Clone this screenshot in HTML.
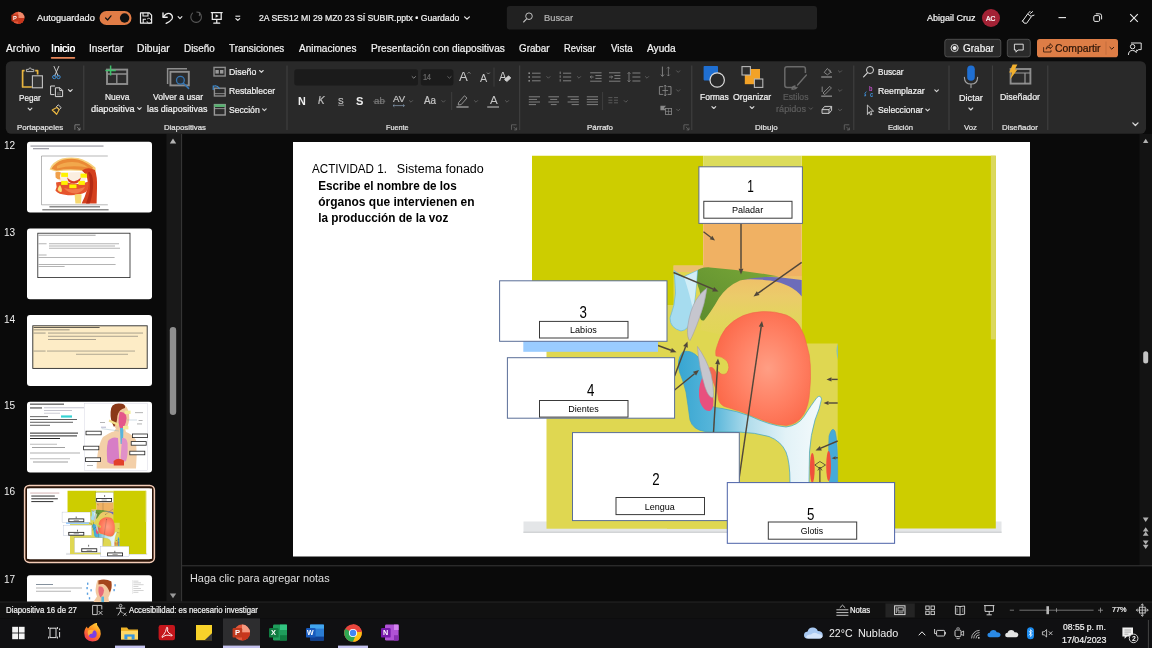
<!DOCTYPE html>
<html lang="es"><head><meta charset="utf-8"><title>2A SES12 MI 29 MZ0 23 SÍ SUBIR.pptx - PowerPoint</title>
<style>html,body{margin:0;padding:0;background:#0a0a0a;}
body{width:1152px;height:648px;overflow:hidden;position:relative;font-family:"Liberation Sans",sans-serif;}
#labels{position:absolute;left:0;top:0;width:1152px;height:648px;will-change:transform;}
#app{position:absolute;left:0;top:0;width:1152px;height:648px;overflow:hidden;background:#0a0a0a;}
svg{position:absolute;left:0;top:0;will-change:transform;}
svg text{font-family:"Liberation Sans",sans-serif;}
.t{position:absolute;white-space:pre;display:block;transform-origin:0 50%;-webkit-text-stroke:0.22px currentColor;}</style></head><body><div id="app">
<svg width="1152" height="648" viewBox="0 0 1152 648">
<g id="titlebar"><circle cx="18.2" cy="17.9" r="6.2" fill="#e4573a"/><path d="M18.2,11.7 A6.2,6.2 0 0 1 24.4,17.9 L18.2,17.9 Z" fill="#f08a6c"/><path d="M18.2,17.9 L24.4,17.9 A6.2,6.2 0 0 1 18.2,24.1 Z" fill="#c8361c"/>
<rect x="11.4" y="14.4" width="7" height="7" rx="1" fill="#c03a1e"/>
<rect x="99.5" y="11" width="32" height="14" rx="7" fill="#e17c46"/><circle cx="124.6" cy="18" r="4.7" fill="#101010"/>
<path d="M105.6,18 L107.6,20 L111,15.8" stroke="#141414" stroke-width="1.2" fill="none" stroke-linecap="round" stroke-linejoin="round"/>
<path d="M140.5,12.8 L149.3,12.8 L151.6,15.1 L151.6,23.2 L140.5,23.2 Z" stroke="#ececec" stroke-width="1.2" fill="none" stroke-linejoin="round"/>
<path d="M143,12.8 L143,16 L148,16 L148,12.8 M143.2,23 L143.2,19.3 L146,19.3" stroke="#ececec" stroke-width="1.1" fill="none"/>
<path d="M147.2,19 A2.2,2.2 0 0 1 151,20.5 M150.8,22.6 A2.2,2.2 0 0 1 147,21.2" stroke="#ececec" stroke-width="0.9" fill="none"/><rect x="146" y="17.6" width="6.4" height="6.4" fill="#0a0a0a" opacity="0"/>
<path d="M163,13 L163,17.2 L167.2,17.2" stroke="#ececec" stroke-width="1.35" fill="none" stroke-linecap="round" stroke-linejoin="round"/>
<path d="M163.3,17 Q166.4,12.4 170,13.6 Q173.4,15.6 172,19 Q170.4,21.4 166.2,23.4" stroke="#ececec" stroke-width="1.35" fill="none" stroke-linecap="round"/>
<path d="M178.1,16.7 L180.0,18.6 L181.9,16.7" stroke="#ececec" stroke-width="1.1" fill="none" stroke-linecap="round" stroke-linejoin="round"/>
<path d="M199.5,13 A5.3,5.3 0 1 1 192.5,13.2" stroke="#585858" stroke-width="1.1" fill="none" stroke-linecap="round"/><path d="M196.8,12 L199.8,12.6 L199.3,15.6" stroke="#585858" stroke-width="1.1" fill="none" stroke-linecap="round" stroke-linejoin="round"/>
<path d="M211.3,12.6 L222.2,12.6 M212.3,12.6 L212.3,19.4 L221.2,19.4 L221.2,12.6 M216.75,19.4 L216.75,23 M213.8,23.2 L219.7,23.2" stroke="#ececec" stroke-width="1.25" fill="none" stroke-linecap="round"/>
<path d="M215.6,14.3 L218.6,16 L215.6,17.7 Z" fill="#ececec"/>
<path d="M235.4,16.2 L240.2,16.2" stroke="#ececec" stroke-width="1.1"/><path d="M235.9,18.6 L237.8,20.4 L239.7,18.6" stroke="#ececec" stroke-width="1.2" fill="none" stroke-linecap="round" stroke-linejoin="round"/>
<path d="M464.6,16.8 L467.0,19.2 L469.4,16.8" stroke="#ececec" stroke-width="1.2" fill="none" stroke-linecap="round" stroke-linejoin="round"/>
<rect x="506.8" y="6" width="310.2" height="23.6" rx="3" fill="#212121"/>
<circle cx="529" cy="16.2" r="3.3" stroke="#c0c0c0" stroke-width="1" fill="none"/><path d="M526.6,18.8 L523.6,22" stroke="#c0c0c0" stroke-width="1.1" stroke-linecap="round"/>
<circle cx="991" cy="18" r="9" fill="#a32235"/>
<path d="M1022.6,21 L1027.6,14 L1031.4,16.6 L1026.6,23.3 Q1023.6,24.2 1022.6,21 Z M1028,13.6 L1030,11.4 M1031.6,16 L1034,15.2 M1030.4,13.4 L1032.6,11.6" stroke="#ececec" stroke-width="1" fill="none" stroke-linejoin="round" stroke-linecap="round"/>
<path d="M1058.5,17.6 L1066,17.6" stroke="#ececec" stroke-width="1.1"/>
<rect x="1093.8" y="15.6" width="5.8" height="5.8" rx="1.2" stroke="#ececec" stroke-width="1" fill="none"/><path d="M1095.8,13.8 L1099.6,13.8 Q1101.6,13.8 1101.6,15.8 L1101.6,19.4" stroke="#ececec" stroke-width="1" fill="none"/>
<path d="M1130.2,14.2 L1137.8,21.8 M1137.8,14.2 L1130.2,21.8" stroke="#ececec" stroke-width="1.1"/>
<rect x="50.8" y="57" width="24.4" height="1.7" rx="0.8" fill="#e8875a"/>
<rect x="944.8" y="39.3" width="56" height="17.6" rx="2.5" fill="#2a2a2a" stroke="#5a5a5a" stroke-width="0.8"/>
<circle cx="954.6" cy="48" r="3.6" stroke="#ececec" stroke-width="0.9" fill="none"/><circle cx="954.6" cy="48" r="2" fill="#ececec"/>
<rect x="1007.3" y="39.3" width="23" height="17.6" rx="2.5" fill="#2a2a2a" stroke="#5a5a5a" stroke-width="0.8"/>
<path d="M1014.4,44.2 L1023.2,44.2 L1023.2,50 L1018,50 L1016,52.2 L1016,50 L1014.4,50 Z" stroke="#ececec" stroke-width="0.9" fill="none" stroke-linejoin="round"/>
<rect x="1037" y="39" width="81" height="18.2" rx="2.8" fill="#dd7d46"/>
<path d="M1106,41.5 L1106,54.7" stroke="#b9673a" stroke-width="0.7"/>
<path d="M1043.6,47.2 L1043.6,52 L1051,52 L1051,50.2 M1046,49.2 Q1046.4,45.6 1050,45.4 L1050,43.6 L1052.8,46.2 L1050,48.8 L1050,47.2 Q1047.4,47.2 1046,49.2 Z" stroke="#3a1c0c" stroke-width="0.85" fill="none" stroke-linejoin="round"/>
<path d="M1109.9,47.3 L1111.8,49.2 L1113.7,47.3" stroke="#3a1c0c" stroke-width="1" fill="none" stroke-linecap="round" stroke-linejoin="round"/>
<circle cx="1132.6" cy="46.6" r="2.2" stroke="#ececec" stroke-width="0.95" fill="none"/><path d="M1128.4,54.6 Q1128.6,50.4 1132.6,50.4 Q1135.4,50.4 1136.4,52.6" stroke="#ececec" stroke-width="0.95" fill="none" stroke-linecap="round"/><path d="M1131,43 L1141.2,43 L1141.2,49.6 L1138.6,49.6 L1136.6,51.4 L1136.8,49.6" stroke="#ececec" stroke-width="0.95" fill="none" stroke-linejoin="round"/></g>
<g id="ribbon"><rect x="5.8" y="61.2" width="1140.2" height="72.6" rx="5.5" fill="#292929"/>
<path d="M83.8,65.5 L83.8,130" stroke="#454545" stroke-width="0.9"/>
<path d="M287,65.5 L287,130" stroke="#454545" stroke-width="0.9"/>
<path d="M519.7,65.5 L519.7,130" stroke="#454545" stroke-width="0.9"/>
<path d="M691.8,65.5 L691.8,130" stroke="#454545" stroke-width="0.9"/>
<path d="M853.8,65.5 L853.8,130" stroke="#454545" stroke-width="0.9"/>
<path d="M949,65.5 L949,130" stroke="#454545" stroke-width="0.9"/>
<path d="M992.4,65.5 L992.4,130" stroke="#454545" stroke-width="0.9"/>
<path d="M1047.8,65.5 L1047.8,130" stroke="#454545" stroke-width="0.9"/>
<path d="M74.9,124.8 L74.9,129.8 M74.9,124.8 L79.9,124.8" stroke="#8c8c8c" stroke-width="0.8" fill="none"/><path d="M76.9,126.8 L80.0,129.9 M80.0,127.5 L80.0,129.9 L77.60000000000001,129.9" stroke="#8c8c8c" stroke-width="0.8" fill="none"/>
<path d="M511.5,124.8 L511.5,129.8 M511.5,124.8 L516.5,124.8" stroke="#6a6a6a" stroke-width="0.8" fill="none"/><path d="M513.5,126.8 L516.6,129.9 M516.6,127.5 L516.6,129.9 L514.2,129.9" stroke="#6a6a6a" stroke-width="0.8" fill="none"/>
<path d="M683.9,124.8 L683.9,129.8 M683.9,124.8 L688.9,124.8" stroke="#6a6a6a" stroke-width="0.8" fill="none"/><path d="M685.9,126.8 L689.0,129.9 M689.0,127.5 L689.0,129.9 L686.6,129.9" stroke="#6a6a6a" stroke-width="0.8" fill="none"/>
<path d="M844.3,124.8 L844.3,129.8 M844.3,124.8 L849.3,124.8" stroke="#6a6a6a" stroke-width="0.8" fill="none"/><path d="M846.3,126.8 L849.4,129.9 M849.4,127.5 L849.4,129.9 L847.0,129.9" stroke="#6a6a6a" stroke-width="0.8" fill="none"/>
<path d="M24.6,70.6 L22.6,70.6 L22.6,87 L31.8,87" stroke="#e8b540" stroke-width="1.7" fill="none" stroke-linejoin="round"/>
<path d="M35.2,70.6 L37.6,70.6 L37.6,74.6" stroke="#e8b540" stroke-width="1.7" fill="none" stroke-linejoin="round"/>
<path d="M26.4,71.6 L26.4,69.4 L28.6,69.4 Q30,66.2 31.6,69.4 L33.8,69.4 L33.8,71.6 Z" stroke="#b8b8b8" stroke-width="1" fill="#2f2f2f" stroke-linejoin="round"/>
<rect x="32.4" y="75.8" width="10" height="12" stroke="#c4c4c4" stroke-width="1.1" fill="#343434"/>
<path d="M28.1,108.2 L30.0,110.2 L31.9,108.2" stroke="#d8d8d8" stroke-width="1.1" fill="none" stroke-linecap="round" stroke-linejoin="round"/>
<path d="M54,66.4 L58.2,76 M58.8,66.4 L54.6,76" stroke="#c8c8c8" stroke-width="1" fill="none" stroke-linecap="round"/>
<circle cx="54.3" cy="77" r="1.7" stroke="#3f8fd6" stroke-width="1" fill="none"/><circle cx="58.5" cy="77" r="1.7" stroke="#3f8fd6" stroke-width="1" fill="none"/>
<path d="M55,86 L50.6,86 L50.6,94.6 L54.4,94.6" stroke="#d8d8d8" stroke-width="1" fill="none" stroke-linejoin="round"/>
<path d="M55.4,87.8 L60,87.8 L62.6,90.4 L62.6,96.6 L55.4,96.6 Z M59.8,88 L59.8,90.6 L62.4,90.6" stroke="#d8d8d8" stroke-width="1" fill="none" stroke-linejoin="round"/>
<path d="M57,93 L61,93 M57,94.8 L61,94.8" stroke="#9c9c9c" stroke-width="0.6"/>
<path d="M68.4,89.6 L70.3,91.5 L72.2,89.6" stroke="#d8d8d8" stroke-width="1.1" fill="none" stroke-linecap="round" stroke-linejoin="round"/>
<path d="M58.2,104.8 L61.2,107.6 L59.4,109.6 L56.4,106.8 Z" stroke="#d8d8d8" stroke-width="0.9" fill="none" stroke-linejoin="round"/>
<path d="M56.8,107.4 L52.2,110 L56.6,114.4 L59.2,109.6 Z" stroke="#e8b540" stroke-width="1.1" fill="none" stroke-linejoin="round"/><path d="M54.2,111.2 L56,112.8" stroke="#e8b540" stroke-width="0.8"/>
<rect x="107" y="69.6" width="20.2" height="14.4" stroke="#8e8e8e" stroke-width="1.9" fill="#2c2c2c"/>
<path d="M106.8,74 L127.4,74 M116.8,74 L116.8,84" stroke="#8e8e8e" stroke-width="1.4"/>
<path d="M110.6,65.4 L110.6,75.4 M105.4,70.4 L115.8,70.4" stroke="#3fbf6a" stroke-width="1.5"/>
<path d="M137.6,107.7 L139.4,109.5 L141.2,107.7" stroke="#d8d8d8" stroke-width="1.1" fill="none" stroke-linecap="round" stroke-linejoin="round"/>
<path d="M167.6,84 L167.6,68.8 L187,68.8" stroke="#8e8e8e" stroke-width="1.5" fill="none"/>
<rect x="170.4" y="71.8" width="18.4" height="13.6" stroke="#8e8e8e" stroke-width="1.9" fill="#2c2c2c"/>
<circle cx="180.4" cy="80.2" r="3.9" stroke="#3576b4" stroke-width="1.3" fill="#26303a"/><path d="M183.4,83.2 L188.6,88.4" stroke="#3576b4" stroke-width="1.5" stroke-linecap="round"/>
<rect x="214" y="67.4" width="11.2" height="8.6" stroke="#8e8e8e" stroke-width="1.4" fill="#2c2c2c"/><rect x="215.4" y="70" width="3.4" height="3.6" fill="#9a9a9a"/><rect x="220" y="70" width="3.4" height="3.6" fill="#9a9a9a"/>
<path d="M259.6,70.5 L261.4,72.3 L263.2,70.5" stroke="#d8d8d8" stroke-width="1.1" fill="none" stroke-linecap="round" stroke-linejoin="round"/>
<rect x="214.4" y="88.2" width="10.8" height="7.8" stroke="#8e8e8e" stroke-width="1.4" fill="#2c2c2c"/><path d="M214.2,93.6 L225.2,93.6" stroke="#9a9a9a" stroke-width="0.8"/>
<path d="M213.2,89.4 L213.2,86 L216.4,86 M213.4,86.2 Q217.2,84.6 219.4,88.6" stroke="#3f8fd6" stroke-width="1.1" fill="none" stroke-linecap="round"/>
<rect x="214.4" y="104.6" width="10.8" height="10.4" stroke="#9a9a9a" stroke-width="1.4" fill="#2c2c2c"/><rect x="214.2" y="104.4" width="11" height="2.6" fill="#57b070"/><path d="M214.2,108.6 L225.2,108.6" stroke="#a8a8a8" stroke-width="0.8"/>
<path d="M262.6,108.9 L264.4,110.7 L266.2,108.9" stroke="#d8d8d8" stroke-width="1.1" fill="none" stroke-linecap="round" stroke-linejoin="round"/>
<rect x="294.3" y="69.2" width="123.7" height="16.2" rx="2.5" fill="#1b1b1b"/>
<rect x="420.8" y="69.2" width="32.6" height="16.2" rx="2.5" fill="#1b1b1b"/>
<path d="M412.1,76.6 L413.8,78.2 L415.5,76.6" stroke="#8a8a8a" stroke-width="0.9" fill="none" stroke-linecap="round" stroke-linejoin="round"/>
<path d="M447.7,76.6 L449.4,78.2 L451.1,76.6" stroke="#6a6a6a" stroke-width="0.9" fill="none" stroke-linecap="round" stroke-linejoin="round"/>
<path d="M467.6,73.6 L469,72.2 L470.4,73.6" stroke="#9c9c9c" stroke-width="0.8" fill="none"/>
<path d="M487,72.6 L488.4,74 L489.8,72.6" stroke="#9c9c9c" stroke-width="0.8" fill="none"/>
<path d="M494,67.6 L494,86.6" stroke="#454545" stroke-width="0.8"/>
<path d="M504.6,79.4 L508.6,75.8 L510.8,78 L506.8,81.6 Z" stroke="#d8d8d8" stroke-width="0.8" fill="#ccc"/>
<path d="M451.7,92 L451.7,110" stroke="#454545" stroke-width="0.8"/>
<path d="M338,105.2 L344,105.2" stroke="#9c9c9c" stroke-width="0.8"/>
<path d="M373,101.4 L385.4,101.4" stroke="#606060" stroke-width="0.8"/>
<path d="M393,105.6 L404.4,105.6 M393,105.6 L394.4,104.4 M393,105.6 L394.4,106.8 M404.4,105.6 L403,104.4 M404.4,105.6 L403,106.8" stroke="#8aa0b8" stroke-width="0.7" fill="none"/>
<path d="M409.4,100.6 L411.0,102.2 L412.6,100.6" stroke="#606060" stroke-width="0.9" fill="none" stroke-linecap="round" stroke-linejoin="round"/>
<path d="M441.8,100.6 L443.4,102.2 L445.0,100.6" stroke="#606060" stroke-width="0.9" fill="none" stroke-linecap="round" stroke-linejoin="round"/>
<path d="M474.4,100.6 L476.0,102.2 L477.6,100.6" stroke="#606060" stroke-width="0.9" fill="none" stroke-linecap="round" stroke-linejoin="round"/>
<path d="M505.4,100.6 L507.0,102.2 L508.6,100.6" stroke="#606060" stroke-width="0.9" fill="none" stroke-linecap="round" stroke-linejoin="round"/>
<path d="M458.6,102.6 L464.4,95.8 L467,98 L461.2,104.6 L458.2,105 Z" stroke="#9c9c9c" stroke-width="0.9" fill="none" stroke-linejoin="round"/><path d="M456.4,107 L468.6,107" stroke="#8c8c8c" stroke-width="1.6"/>
<path d="M487.2,107 L499,107" stroke="#8c8c8c" stroke-width="1.6"/>
<rect x="528.4" y="72.4" width="1.6" height="1.6" fill="#8a8a8a"/><path d="M532,73.2 L540.6,73.2" stroke="#8a8a8a" stroke-width="0.9"/>
<rect x="528.4" y="76.2" width="1.6" height="1.6" fill="#8a8a8a"/><path d="M532,77 L540.6,77" stroke="#8a8a8a" stroke-width="0.9"/>
<rect x="528.4" y="80.0" width="1.6" height="1.6" fill="#8a8a8a"/><path d="M532,80.8 L540.6,80.8" stroke="#8a8a8a" stroke-width="0.9"/>
<path d="M546.8,76.6 L548.4,78.2 L550.0,76.6" stroke="#606060" stroke-width="0.9" fill="none" stroke-linecap="round" stroke-linejoin="round"/>
<path d="M560.2,71.6 L560.2,82.6" stroke="#8a8a8a" stroke-width="0.9" stroke-dasharray="2.4,1.4"/><path d="M563,73.2 L571.2,73.2" stroke="#8a8a8a" stroke-width="0.9"/><path d="M563,77 L571.2,77" stroke="#8a8a8a" stroke-width="0.9"/><path d="M563,80.8 L571.2,80.8" stroke="#8a8a8a" stroke-width="0.9"/>
<path d="M577.4,76.6 L579.0,78.2 L580.6,76.6" stroke="#606060" stroke-width="0.9" fill="none" stroke-linecap="round" stroke-linejoin="round"/>
<path d="M590.2,72.8 L601.6,72.8" stroke="#8a8a8a" stroke-width="0.9"/><path d="M590.2,81.2 L601.6,81.2" stroke="#8a8a8a" stroke-width="0.9"/><path d="M595.4,75.6 L601.6,75.6" stroke="#8a8a8a" stroke-width="0.9"/><path d="M595.4,78.4 L601.6,78.4" stroke="#8a8a8a" stroke-width="0.9"/><path d="M593.6,77 L590.2,77 M591.6,75.6 L590.2,77 L591.6,78.4" stroke="#8a8a8a" stroke-width="0.8" fill="none"/>
<path d="M609,72.8 L620.4,72.8" stroke="#8a8a8a" stroke-width="0.9"/><path d="M609,81.2 L620.4,81.2" stroke="#8a8a8a" stroke-width="0.9"/><path d="M614.4,75.6 L620.4,75.6" stroke="#8a8a8a" stroke-width="0.9"/><path d="M614.4,78.4 L620.4,78.4" stroke="#8a8a8a" stroke-width="0.9"/><path d="M609,77 L612.6,77 M611.2,75.6 L612.6,77 L611.2,78.4" stroke="#8a8a8a" stroke-width="0.8" fill="none"/>
<path d="M632.4,73 L640.4,73" stroke="#8a8a8a" stroke-width="0.9"/><path d="M632.4,77 L640.4,77" stroke="#8a8a8a" stroke-width="0.9"/><path d="M632.4,81 L640.4,81" stroke="#8a8a8a" stroke-width="0.9"/><path d="M629,72.4 L629,81.8 M627.6,73.8 L629,72.4 L630.4,73.8 M627.6,80.4 L629,81.8 L630.4,80.4" stroke="#8a8a8a" stroke-width="0.8" fill="none"/>
<path d="M645.4,76.6 L647.0,78.2 L648.6,76.6" stroke="#606060" stroke-width="0.9" fill="none" stroke-linecap="round" stroke-linejoin="round"/>
<path d="M662.4,66.6 L662.4,76.2 M660.8,74.6 L662.4,76.4 L664,74.6" stroke="#8a8a8a" stroke-width="0.9" fill="none"/>
<path d="M668.4,67 L668.4,76 M667,68.4 L668.4,67 L669.8,68.4 M667,74.6 L668.4,76 L669.8,74.6" stroke="#8a8a8a" stroke-width="0.7" fill="none"/>
<path d="M676.6,70.8 L678.2,72.4 L679.8,70.8" stroke="#606060" stroke-width="0.9" fill="none" stroke-linecap="round" stroke-linejoin="round"/>
<path d="M676.6,89.8 L678.2,91.4 L679.8,89.8" stroke="#606060" stroke-width="0.9" fill="none" stroke-linecap="round" stroke-linejoin="round"/>
<path d="M676.6,109.2 L678.2,110.8 L679.8,109.2" stroke="#606060" stroke-width="0.9" fill="none" stroke-linecap="round" stroke-linejoin="round"/>
<path d="M663,86.6 L659.4,86.6 L659.4,94.4 L663,94.4 M667.6,86.6 L671,86.6 L671,94.4 L667.6,94.4" stroke="#8a8a8a" stroke-width="0.9" fill="none"/><path d="M665.2,85 L665.2,96 M662.4,90.5 L668.2,90.5 M664,86.6 L665.2,85 L666.4,86.6 M664,94.4 L665.2,96 L666.4,94.4" stroke="#8a8a8a" stroke-width="0.8" fill="none"/>
<path d="M660.4,105.8 L666,105.8 L664,108 L666,110.2 L660.4,110.2 Z" fill="#8a8a8a"/><rect x="665.4" y="108.4" width="6.2" height="6" stroke="#8a8a8a" stroke-width="0.8" fill="none"/><path d="M665.4,111.4 L671.6,111.4 M668.5,108.4 L668.5,114.4" stroke="#8a8a8a" stroke-width="0.6"/>
<path d="M528.8,96.8 L540,96.8" stroke="#8a8a8a" stroke-width="0.9"/><path d="M528.8,99.4 L537,99.4" stroke="#8a8a8a" stroke-width="0.9"/><path d="M528.8,102 L540,102" stroke="#8a8a8a" stroke-width="0.9"/><path d="M528.8,104.6 L536,104.6" stroke="#8a8a8a" stroke-width="0.9"/>
<path d="M548.4,96.8 L559,96.8" stroke="#8a8a8a" stroke-width="0.9"/><path d="M550.2,99.4 L557.2,99.4" stroke="#8a8a8a" stroke-width="0.9"/><path d="M548.4,102 L559,102" stroke="#8a8a8a" stroke-width="0.9"/><path d="M550.8,104.6 L556.6,104.6" stroke="#8a8a8a" stroke-width="0.9"/>
<path d="M567.6,96.8 L578.8,96.8" stroke="#8a8a8a" stroke-width="0.9"/><path d="M570.6,99.4 L578.8,99.4" stroke="#8a8a8a" stroke-width="0.9"/><path d="M567.6,102 L578.8,102" stroke="#8a8a8a" stroke-width="0.9"/><path d="M571.6,104.6 L578.8,104.6" stroke="#8a8a8a" stroke-width="0.9"/>
<path d="M586.8,96.8 L598,96.8" stroke="#8a8a8a" stroke-width="0.9"/><path d="M586.8,99.4 L598,99.4" stroke="#8a8a8a" stroke-width="0.9"/><path d="M586.8,102 L598,102" stroke="#8a8a8a" stroke-width="0.9"/><path d="M586.8,104.6 L598,104.6" stroke="#8a8a8a" stroke-width="0.9"/>
<path d="M602.6,92 L602.6,110" stroke="#454545" stroke-width="0.8"/>
<path d="M608.4,97.6 L612.4,97.6" stroke="#606060" stroke-width="0.9"/><path d="M608.4,100.2 L612.4,100.2" stroke="#606060" stroke-width="0.9"/><path d="M608.4,102.8 L612.4,102.8" stroke="#606060" stroke-width="0.9"/><path d="M614,97.6 L618,97.6" stroke="#606060" stroke-width="0.9"/><path d="M614,100.2 L618,100.2" stroke="#606060" stroke-width="0.9"/><path d="M614,102.8 L618,102.8" stroke="#606060" stroke-width="0.9"/>
<path d="M624.2,100.6 L625.8,102.2 L627.4,100.6" stroke="#606060" stroke-width="0.9" fill="none" stroke-linecap="round" stroke-linejoin="round"/>
<rect x="703.6" y="66" width="14.4" height="14.4" rx="0.8" fill="#1f6fd2"/><circle cx="717.2" cy="80" r="7.2" fill="#292929" stroke="#dcdcdc" stroke-width="1.2"/>
<path d="M711.9,106.6 L713.8,108.5 L715.7,106.6" stroke="#d8d8d8" stroke-width="1.1" fill="none" stroke-linecap="round" stroke-linejoin="round"/>
<rect x="744.8" y="69" width="15.2" height="15.2" fill="#f2a227"/><rect x="742" y="66.6" width="8.4" height="8.4" fill="#2d2d2d" stroke="#b8b8b8" stroke-width="1.1"/><rect x="754.4" y="79" width="8.4" height="8.4" fill="#2d2d2d" stroke="#b8b8b8" stroke-width="1.1"/>
<path d="M750.1,106.6 L752.0,108.5 L753.9,106.6" stroke="#d8d8d8" stroke-width="1.1" fill="none" stroke-linecap="round" stroke-linejoin="round"/>
<path d="M796,87.4 L787,87.4 Q784.8,87.4 784.8,85.2 L784.8,69 Q784.8,66.8 787,66.8 L803.2,66.8 Q805.4,66.8 805.4,69 L805.4,73" stroke="#6a6a6a" stroke-width="1.5" fill="none" stroke-linejoin="round"/>
<path d="M806.4,75 L797.6,85 M795,86 Q792.4,86.4 792,89 Q795.6,89.6 797,87.4" stroke="#6e6e6e" stroke-width="1.3" fill="none" stroke-linecap="round"/>
<path d="M809.2,107.8 L810.8,109.4 L812.4,107.8" stroke="#606060" stroke-width="0.9" fill="none" stroke-linecap="round" stroke-linejoin="round"/>
<path d="M824.2,72.4 L827.4,68.4 L830.6,72.4 L827.4,74.8 Z M829.6,69.6 L831.4,73" stroke="#8e8e8e" stroke-width="0.9" fill="none" stroke-linejoin="round"/><path d="M821.2,77 L832,77" stroke="#7c7c7c" stroke-width="1.6"/>
<path d="M823,93 L829.8,86.4 L831.4,88 L824.8,94.6 Z M822.2,86.6 L822.2,92" stroke="#8e8e8e" stroke-width="0.9" fill="none" stroke-linejoin="round"/><path d="M821.2,96.2 L832,96.2" stroke="#7c7c7c" stroke-width="1.6"/>
<path d="M822,109.6 L824.6,106.4 L831.6,106.4 L831.6,110.4 L829,113.4 L822,113.4 Z M822,109.6 L829,109.6 L831.6,106.6 M829,109.6 L829,113.4" stroke="#d8d8d8" stroke-width="0.9" fill="#3a3a3a" stroke-linejoin="round"/>
<path d="M838.4,70.8 L840.0,72.4 L841.6,70.8" stroke="#606060" stroke-width="0.9" fill="none" stroke-linecap="round" stroke-linejoin="round"/>
<path d="M838.4,89.8 L840.0,91.4 L841.6,89.8" stroke="#606060" stroke-width="0.9" fill="none" stroke-linecap="round" stroke-linejoin="round"/>
<path d="M838.4,109.2 L840.0,110.8 L841.6,109.2" stroke="#606060" stroke-width="0.9" fill="none" stroke-linecap="round" stroke-linejoin="round"/>
<circle cx="870" cy="70" r="3.5" stroke="#d8d8d8" stroke-width="1" fill="none"/><path d="M867.4,72.8 L863.6,76.8" stroke="#d8d8d8" stroke-width="1.1" stroke-linecap="round"/>
<path d="M866.4,91.6 Q864,93 865.4,95.6 M864.2,95.8 L865.6,95.8 L865.6,94.4" stroke="#3f8fd6" stroke-width="0.9" fill="none"/>
<path d="M867.4,114.6 L867.4,105 L873.6,111.2 L870.6,111.2 L872,114.4 L870.6,115 L869.2,111.8 Z" stroke="#d8d8d8" stroke-width="0.85" fill="none" stroke-linejoin="round"/>
<path d="M934.8,89.9 L936.6,91.7 L938.4,89.9" stroke="#d8d8d8" stroke-width="1.1" fill="none" stroke-linecap="round" stroke-linejoin="round"/>
<path d="M925.8,109.1 L927.6,110.9 L929.4,109.1" stroke="#d8d8d8" stroke-width="1.1" fill="none" stroke-linecap="round" stroke-linejoin="round"/>
<rect x="967.2" y="65.4" width="7.6" height="15.4" rx="3.8" fill="#1f6fd2"/><path d="M964.4,77.4 Q964.6,84 971,84 Q977.4,84 977.6,77.4 M971,84.2 L971,87.6" stroke="#a8a8a8" stroke-width="1.1" fill="none" stroke-linecap="round"/>
<path d="M968.9,108.0 L970.8,110.0 L972.7,108.0" stroke="#d8d8d8" stroke-width="1.1" fill="none" stroke-linecap="round" stroke-linejoin="round"/>
<rect x="1010.6" y="69" width="19.8" height="14.6" stroke="#8e8e8e" stroke-width="1.9" fill="#2c2c2c"/><path d="M1012,73 L1030.4,73 M1025,73 L1025,83.8" stroke="#9a9a9a" stroke-width="1.2"/>
<path d="M1012.6,64.6 L1017.4,64.6 L1014.8,69.6 L1017.4,69.6 L1010.2,79.4 L1012,72.6 L1009.2,72.6 Z" fill="#f2b02e"/>
<path d="M1132.8,122.9 L1135.4,125.5 L1138.0,122.9" stroke="#d8d8d8" stroke-width="1.3" fill="none" stroke-linecap="round" stroke-linejoin="round"/></g>
<g id="slide"><defs>
<radialGradient id="mtg" cx="0.55" cy="0.5" r="0.62"><stop offset="0" stop-color="#ff9e84"/><stop offset="0.55" stop-color="#ff7f62"/><stop offset="1" stop-color="#fb6646"/></radialGradient>
<linearGradient id="mbl" x1="0" x2="1" y1="0" y2="0"><stop offset="0" stop-color="#38a6d2"/><stop offset="0.25" stop-color="#58b6da"/><stop offset="0.5" stop-color="#b4deec"/><stop offset="0.75" stop-color="#e2f2f7"/><stop offset="1" stop-color="#f4fafc"/></linearGradient>
<linearGradient id="mor" x1="0" x2="0" y1="0" y2="1"><stop offset="0" stop-color="#efbf68"/><stop offset="0.3" stop-color="#ebcb6a"/><stop offset="0.6" stop-color="#e3d45e"/><stop offset="1" stop-color="#dfd751"/></linearGradient>
<linearGradient id="mgr" x1="0" x2="1" y1="1" y2="0"><stop offset="0" stop-color="#5c8c2e"/><stop offset="1" stop-color="#7aa838"/></linearGradient>
</defs>
<rect x="293" y="142" width="737" height="414.5" fill="#fff"/>
<rect x="523.5" y="521.5" width="478" height="11.5" fill="#e4e6e8"/>
<rect x="523.5" y="531.5" width="478" height="1.5" fill="#d2d4d6"/>
<rect x="546.5" y="300" width="291.5" height="228.7" fill="#dfd751"/>
<rect x="667" y="265" width="171" height="263.7" fill="#dfd751"/>
<polygon points="532,155.7 703.2,155.7 703.2,265.4 673.5,265.4 673.5,305 532,305" fill="#cdcd00"/>
<polygon points="801.7,155.7 995.8,155.7 995.8,528.6 837.7,528.6 837.7,343.5 801.7,343.5" fill="#cdcd00"/>
<rect x="703.2" y="155.7" width="98.5" height="11.3" fill="#dcdc5c"/>
<rect x="990.9" y="155.7" width="4.9" height="183.7" fill="#dbd85c"/>
<rect x="703.2" y="223" width="98.5" height="56" fill="#f0b163"/>
<path d="M801.7,276 L801.7,343.5 L760,343.5 L700,330 Q704,312 712,298 Q722,284 738,279.5 Q760,276 801.7,276 Z" fill="url(#mor)"/>
<polygon points="673.5,265.4 703.2,265.4 703.2,272 673.5,272" fill="#ecc070"/>
<path d="M742,277.5 Q770,275 801.7,280 L801.7,296.5 Q792,284 770,280.5 Q755,278.5 742,279.5 Z" fill="#6c6cba"/>
<path d="M696.4,272 Q699,267 710,267.4 Q745,270 779,276.6 Q753,277 740,280.4 Q727,286 719,298 Q711,312 704,320.4 Q699.6,321.4 700,314 Q702.4,300 699.4,290 Q695.4,280 696.4,272 Z" fill="url(#mgr)"/>
<path d="M674,270.5 L683,277 L697.5,270.5 Q696,295 692,318 Q689,330 681,331 Q670,328 670,318 Q675,305 675.5,293 Q675,280 674,270.5 Z" fill="#a6dcef" stroke="#6fbfe0" stroke-width="0.8"/>
<path d="M684,277 L697,271 Q696,292 693,310 Q690,295 684,277 Z" fill="#d2eef7"/>
<path d="M762.6,311.6 Q775,311 786.4,315.1 Q795,319 799.4,325.9 Q805,335 806.9,345.4 Q810,355 810.3,365 Q811,380 809.7,391 Q809,405 803.7,414.5 Q797,424.5 786.4,425.5 Q775,425 764.8,421 Q752,416 743.2,412.5 Q733,409 725.9,407 Q720,405 718.4,399.4 Q716.4,388 716.8,376 Q717,372 718.6,371.6 Q721.4,376 726.5,373.5 Q731,368 727,361 Q722,356 716,356 Q714.8,351 717.3,345.4 Q720,336 725.9,328.1 Q733,320 743.2,315.6 Q752,312 762.6,311.6 Z" fill="url(#mtg)" stroke="#ee6a4a" stroke-width="0.6"/>
<path d="M683,351.5 Q692,350 698,357 Q703,368 703,383 Q703,398 708,404 Q714,408.5 722,408.5 Q737,411 750,416 Q770,425.5 786,427 Q798,425.5 804,416.5 Q812,404 817,397.5 Q820.5,394.5 821.5,399 Q820,408 815,420 Q810.5,435 809.5,452 L809,482.5 L790,482.5 Q790,462 786,452 Q781,441 769,436.5 Q755,432.5 739,432 L705,431.5 Q693,430 690,420 Q688,405 686,392 Q683,380 679.5,372 Q676,360 683,351.5 Z" fill="url(#mbl)" stroke="#3aa0c8" stroke-width="0.7"/>
<path d="M702,378 Q697,390 700,402 Q704,412 710,411 Q715,408 713,396 Q709,384 702,378 Z" fill="#e8507e"/>
<path d="M706,372 Q714,380 717,395 Q718,384 716,372 Q711,362 706,372 Z" fill="#f3694f"/>
<path d="M707,288 Q705,304 699,319 Q694,333 690,340.5 Q687,339 687.6,327 Q690,310 696,300 Q701,292 707,288 Z" fill="#c6c6ce" stroke="#a0a0a8" stroke-width="0.6"/>
<path d="M697.5,346.5 Q706.5,359 711,374 Q714,388 713.4,397.4 Q709,399 705,387 Q699,368 697.5,346.5 Z" fill="#c6c6ce" stroke="#a0a0a8" stroke-width="0.6"/>
<path d="M829,436 Q832,426 835,431 Q838,440 837.7,482.5 L829.5,482.5 Q828,455 829,436 Z" fill="#46aad8" stroke="#3a98c6" stroke-width="0.5"/>
<path d="M837.7,343.5 Q835.5,350 837.7,360 Z" fill="#6ab8dc"/>
<ellipse cx="812.3" cy="468" rx="2.4" ry="15" fill="#f0503c"/>
<ellipse cx="828.6" cy="466" rx="2.4" ry="15" fill="#f0503c"/>
<line x1="741.0" y1="223.4" x2="741.0" y2="268.7" stroke="#51473a" stroke-width="1.45"/><polygon points="741.0,274.5 738.6,268.7 743.4,268.7" fill="#51473a"/>
<line x1="703.5" y1="231.8" x2="711.0" y2="237.5" stroke="#51473a" stroke-width="1.3"/><polygon points="715.0,240.5 709.7,239.2 712.3,235.8" fill="#51473a"/>
<line x1="801.7" y1="262.3" x2="758.2" y2="293.1" stroke="#51473a" stroke-width="1.45"/><polygon points="753.5,296.5 756.8,291.2 759.6,295.1" fill="#51473a"/>
<line x1="673.5" y1="272.5" x2="713.2" y2="289.2" stroke="#51473a" stroke-width="1.45"/><polygon points="718.5,291.5 712.2,291.5 714.1,287.0" fill="#51473a"/>
<line x1="738.5" y1="482.5" x2="761.2" y2="326.7" stroke="#51473a" stroke-width="1.45"/><polygon points="762.0,321.0 763.6,327.1 758.8,326.4" fill="#51473a"/>
<line x1="713.5" y1="432.5" x2="717.6" y2="364.3" stroke="#51473a" stroke-width="1.45"/><polygon points="718.0,358.5 720.1,364.4 715.2,364.1" fill="#51473a"/>
<line x1="674.6" y1="376.0" x2="685.5" y2="346.9" stroke="#51473a" stroke-width="1.45"/><polygon points="687.5,341.5 687.8,347.8 683.2,346.1" fill="#51473a"/>
<line x1="674.6" y1="390.0" x2="694.5" y2="373.7" stroke="#51473a" stroke-width="1.45"/><polygon points="699.0,370.0 696.1,375.6 693.0,371.8" fill="#51473a"/>
<line x1="658.0" y1="345.5" x2="671.0" y2="350.2" stroke="#51473a" stroke-width="1.45"/><polygon points="676.5,352.2 670.2,352.5 671.9,347.9" fill="#51473a"/>
<line x1="837.7" y1="379.4" x2="831.5" y2="379.4" stroke="#51473a" stroke-width="1.4"/><polygon points="826.5,379.4 831.5,377.3 831.5,381.5" fill="#51473a"/>
<line x1="837.7" y1="403.0" x2="828.5" y2="403.0" stroke="#51473a" stroke-width="1.4"/><polygon points="823.5,403.0 828.5,400.9 828.5,405.1" fill="#51473a"/>
<line x1="837.7" y1="441.0" x2="820.8" y2="448.2" stroke="#51473a" stroke-width="1.45"/><polygon points="815.5,450.5 819.9,446.0 821.8,450.5" fill="#51473a"/>
<line x1="837.7" y1="457.8" x2="835.6" y2="457.9" stroke="#51473a" stroke-width="1.45"/><polygon points="831.6,458.2 835.5,456.3 835.7,459.6" fill="#51473a"/>
<path d="M819.9,482.5 L819.9,467.5" stroke="#4a3a30" stroke-width="1.1" fill="none"/>
<path d="M814.8,465 L819.9,461.5 L825.5,465 L819.9,468.5 Z M817.8,470.5 L819.9,467 L822,470.5" stroke="#4a3a30" stroke-width="0.8" fill="none"/>
<rect x="523.3" y="341" width="134.7" height="10.8" fill="#9accff"/>
<rect x="698.9" y="166.8" width="103.5" height="56.6" fill="#fff" stroke="#5f6b86" stroke-width="1"/>
<rect x="703.8" y="201.3" width="88.2" height="16.9" fill="#fff" stroke="#3a3a3a" stroke-width="1"/>
<rect x="499.6" y="280.8" width="167.4" height="60.5" fill="#fff" stroke="#5a6e98" stroke-width="1"/>
<rect x="539.5" y="321.4" width="88.5" height="16.6" fill="#fff" stroke="#3a3a3a" stroke-width="1"/>
<rect x="507.4" y="357.7" width="167.2" height="60.5" fill="#fff" stroke="#5a6e98" stroke-width="1"/>
<rect x="539.5" y="400.5" width="88.5" height="16.6" fill="#fff" stroke="#3a3a3a" stroke-width="1"/>
<rect x="572.5" y="432.6" width="166.8" height="88.0" fill="#fff" stroke="#5a6e98" stroke-width="1"/>
<rect x="616" y="497.5" width="88.5" height="17.1" fill="#fff" stroke="#3a3a3a" stroke-width="1"/>
<rect x="727.3" y="482.6" width="167.3" height="60.7" fill="#fff" stroke="#4c62a8" stroke-width="1"/>
<rect x="768.3" y="522" width="88.4" height="17.2" fill="#fff" stroke="#3a3a3a" stroke-width="1"/>
<text x="312" y="173.3" font-size="12.3" textLength="74.9" lengthAdjust="spacingAndGlyphs" fill="#000">ACTIVIDAD 1.</text>
<text x="396.8" y="173.3" font-size="12.3" textLength="87.0" lengthAdjust="spacingAndGlyphs" fill="#000">Sistema fonado</text>
<text x="318.3" y="189.6" font-size="11.9" textLength="138.4" lengthAdjust="spacingAndGlyphs" font-weight="700" fill="#000">Escribe el nombre de los</text>
<text x="318.3" y="206.0" font-size="11.9" textLength="156.3" lengthAdjust="spacingAndGlyphs" font-weight="700" fill="#000">órganos que intervienen en</text>
<text x="318.3" y="222.4" font-size="11.9" textLength="130.0" lengthAdjust="spacingAndGlyphs" font-weight="700" fill="#000">la producción de la voz</text>
<text x="747.3" y="191.5" font-size="15.8" textLength="6.6" lengthAdjust="spacingAndGlyphs" fill="#000">1</text>
<text x="579.6" y="318.2" font-size="15.8" textLength="7.4" lengthAdjust="spacingAndGlyphs" fill="#000">3</text>
<text x="586.9" y="395.6" font-size="15.8" textLength="7.4" lengthAdjust="spacingAndGlyphs" fill="#000">4</text>
<text x="652.3" y="484.6" font-size="15.8" textLength="7.4" lengthAdjust="spacingAndGlyphs" fill="#000">2</text>
<text x="807.1" y="520.1" font-size="15.8" textLength="7.4" lengthAdjust="spacingAndGlyphs" fill="#000">5</text>
<text x="731.9" y="212.7" font-size="9.3" textLength="31.3" lengthAdjust="spacingAndGlyphs" fill="#000">Paladar</text>
<text x="570" y="332.7" font-size="9.3" textLength="26.8" lengthAdjust="spacingAndGlyphs" fill="#000">Labios</text>
<text x="568.2" y="411.8" font-size="9.3" textLength="30.5" lengthAdjust="spacingAndGlyphs" fill="#000">Dientes</text>
<text x="644.8" y="509.5" font-size="9.3" textLength="30.1" lengthAdjust="spacingAndGlyphs" fill="#000">Lengua</text>
<text x="800.8" y="533.6" font-size="9.3" textLength="22.2" lengthAdjust="spacingAndGlyphs" fill="#000">Glotis</text></g>
<g id="lower"><rect x="166.5" y="134" width="14.6" height="467.5" fill="#181818"/>
<path d="M181.6,134 L181.6,601.5" stroke="#3a3a3a" stroke-width="1"/>
<path d="M169.8,143.4 L173,138.4 L176.2,143.4 Z" fill="#b4b4b4"/>
<path d="M169.8,593.4 L173,598.2 L176.2,593.4 Z" fill="#9a9a9a"/>
<rect x="169.8" y="327" width="6.4" height="88" rx="3.2" fill="#8e8e8e"/>
<rect x="1139.4" y="134" width="12.6" height="432" fill="#131313"/>
<path d="M1143,143 L1145.7,138.8 L1148.4,143 Z" fill="#b0b0b0"/>
<rect x="1143.2" y="351.2" width="5" height="12.4" rx="2.5" fill="#c4c4c4"/>
<path d="M1142.8,517.6 L1148.6,517.6 L1145.7,522 Z" fill="#b0b0b0"/>
<path d="M1142.8,531.4 L1145.7,527.2 L1148.6,531.4 Z M1142.8,535.8 L1145.7,531.6 L1148.6,535.8 Z" fill="#b0b0b0"/>
<path d="M1142.8,540.4 L1148.6,540.4 L1145.7,544.6 Z M1142.8,544.8 L1148.6,544.8 L1145.7,549 Z" fill="#b0b0b0"/>
<path d="M182,565.8 L1152,565.8" stroke="#383838" stroke-width="1"/>
<rect x="0" y="601.6" width="1152" height="17" fill="#111111"/>
<path d="M0,602 L1152,602" stroke="#2c2c2c" stroke-width="0.8"/>
<path d="M92.6,605.4 L97.2,605.4 L97.2,614.6 L92.6,614.6 Z M97.2,605.4 L101.8,605.4 L101.8,609.4 M98.6,611 L102.4,614.8 M102.4,611 L98.6,614.8" stroke="#d8d8d8" stroke-width="0.9" fill="none"/>
<circle cx="120.6" cy="605.6" r="1.3" stroke="#d8d8d8" stroke-width="0.8" fill="none"/><path d="M116.4,608.2 L124.8,608.2 M120.6,608.2 L120.6,611 M120.6,611 L118,615 M120.6,611 L122.4,613" stroke="#d8d8d8" stroke-width="0.9" fill="none" stroke-linecap="round"/><path d="M123.2,612.6 L126.4,615.8 M126.4,612.6 L123.2,615.8" stroke="#d8d8d8" stroke-width="0.8"/>
<path d="M836.4,609.8 L848.4,609.8 M836.4,612.6 L848.4,612.6 M836.4,615.3 L848.4,615.3 M839.8,607.8 L842.5,605.2 L845.2,607.8" stroke="#d8d8d8" stroke-width="0.9" fill="none"/>
<rect x="885.4" y="603.4" width="29.4" height="14" fill="#242424"/>
<rect x="894.6" y="605.8" width="10.4" height="8.8" stroke="#d8d8d8" stroke-width="1" fill="none"/><rect x="898" y="607.8" width="5.2" height="3.2" stroke="#d8d8d8" stroke-width="0.8" fill="none"/><path d="M896.4,607.4 L896.4,613 M898,612.8 L903.2,612.8" stroke="#d8d8d8" stroke-width="0.7"/>
<rect x="925.8" y="606" width="3.4" height="3.4" stroke="#d8d8d8" stroke-width="0.9" fill="none"/>
<rect x="931" y="606" width="3.4" height="3.4" stroke="#d8d8d8" stroke-width="0.9" fill="none"/>
<rect x="925.8" y="611.2" width="3.4" height="3.4" stroke="#d8d8d8" stroke-width="0.9" fill="none"/>
<rect x="931" y="611.2" width="3.4" height="3.4" stroke="#d8d8d8" stroke-width="0.9" fill="none"/>
<path d="M960,606.4 L960,614.8 M955.4,606 L955.4,614.2 L960,614.8 L964.6,614.2 L964.6,606 L960,606.6 Z" stroke="#d8d8d8" stroke-width="0.9" fill="none" stroke-linejoin="round"/><path d="M957,608 L957,612.6 M962.8,608 L962.8,612.6" stroke="#d8d8d8" stroke-width="0.5"/>
<path d="M984,605.6 L994.4,605.6 M985,605.6 L985,611.4 L993.4,611.4 L993.4,605.6 M989.2,611.4 L989.2,614.6 M986.6,614.8 L991.8,614.8" stroke="#d8d8d8" stroke-width="0.95" fill="none"/>
<path d="M1009.8,610.2 L1014,610.2 M1019.4,610.2 L1093.6,610.2" stroke="#8a8a8a" stroke-width="0.8"/>
<path d="M1098,610.2 L1103,610.2 M1100.5,607.7 L1100.5,612.7 M1056.5,608.2 L1056.5,612.2" stroke="#9a9a9a" stroke-width="0.8"/>
<rect x="1046.4" y="606.2" width="2.6" height="8" fill="#b8b8b8"/>
<rect x="1139.4" y="607.2" width="5.8" height="5.8" stroke="#d8d8d8" stroke-width="0.9" fill="none"/><path d="M1142.3,604 L1142.3,616.2 M1136.4,610.1 L1148.2,610.1 M1140.8,605.4 L1142.3,604 L1143.8,605.4 M1140.8,614.8 L1142.3,616.2 L1143.8,614.8 M1137.8,608.6 L1136.4,610.1 L1137.8,611.6 M1146.8,608.6 L1148.2,610.1 L1146.8,611.6" stroke="#d8d8d8" stroke-width="0.8" fill="none"/>
<rect x="0" y="618.4" width="1152" height="29.6" fill="#101012"/>
<rect x="223" y="618.4" width="37" height="29.6" fill="#2d2d2f"/>
<rect x="115" y="645.6" width="30" height="2.4" fill="#c4c2ee"/>
<rect x="223" y="645.6" width="37" height="2.4" fill="#c4c2ee"/>
<rect x="338" y="645.6" width="30" height="2.4" fill="#c4c2ee"/>
<rect x="12.2" y="626.8" width="5.8" height="5.8" fill="#f4f4f4"/>
<rect x="18.8" y="626.8" width="5.8" height="5.8" fill="#f4f4f4"/>
<rect x="12.2" y="633.4" width="5.8" height="5.8" fill="#f4f4f4"/>
<rect x="18.8" y="633.4" width="5.8" height="5.8" fill="#f4f4f4"/>
<rect x="50" y="628.2" width="6" height="9.4" stroke="#e0e0e0" stroke-width="1" fill="none"/><path d="M48.6,627 L48.6,629 M48.6,636.6 L48.6,638.6 M57.4,627 L57.4,629 M57.4,636.6 L57.4,638.6 M59.6,628.4 L59.6,630.2 M59.6,632 L59.6,637.4" stroke="#e0e0e0" stroke-width="1"/>
<defs><linearGradient id="ffg" x1="0.8" y1="0" x2="0.2" y2="1"><stop offset="0" stop-color="#ffd43a"/><stop offset="0.45" stop-color="#ff8a1e"/><stop offset="1" stop-color="#f0305a"/></linearGradient></defs>
<path d="M92.4,624.8 Q95,622.4 97,623 Q96.4,625 98.6,627.2 Q101.2,630 100.8,634 Q100,641.4 92.4,641.4 Q84.4,641 84.2,633 Q84.4,628.4 87,626.4 Q87,628 88,628.6 Q89.6,626 92.4,624.8 Z" fill="url(#ffg)"/>
<circle cx="92.6" cy="634" r="4.1" fill="#7a3fe4"/><path d="M88,630.4 Q91,629 94.6,630.4 Q92,631.4 92.6,633.6 Q90,633.4 88.6,636 Q87,633 88,630.4 Z" fill="#ffb03a"/>
<path d="M121,627.6 L127,627.6 L128.6,629.4 L138,629.4 L138,639.4 L121,639.4 Z" fill="#f0b429"/><rect x="121" y="631" width="17" height="8.4" fill="#ffd866"/><rect x="124.4" y="634.4" width="10.2" height="5" fill="#3a96dd"/><rect x="127.4" y="636.6" width="4.2" height="2.8" fill="#ffd866"/>
<rect x="158.6" y="625" width="16.4" height="15.2" rx="2.2" fill="#c4161c"/><path d="M162.2,637.4 Q161.4,636 163.6,634.8 Q166,631.6 166.4,628.4 Q166.6,626.8 167.4,627.4 Q168.2,629 167.4,631 Q168.6,633.6 171.4,634.6 Q172.8,635 172,635.8 Q170.6,636 169,635.2 Q166,634.8 163.8,636.2 Q162.8,637.8 162.2,637.4 Z" stroke="#fff" stroke-width="0.9" fill="none" stroke-linejoin="round"/>
<rect x="196" y="625" width="16" height="15.2" fill="#f8d22a"/><path d="M212,633.2 L212,640.2 L204.6,640.2 Z" fill="#3a3a3a"/>
<circle cx="242" cy="632.6" r="8" fill="#e4573a"/><path d="M242,624.6 A8,8 0 0 1 250,632.6 L242,632.6 Z" fill="#f59a80"/><path d="M242,632.6 L250,632.6 A8,8 0 0 1 242,640.6 Z" fill="#c8361c"/><rect x="232.6" y="628" width="9.6" height="9.6" rx="1.2" fill="#c03a1e"/>
<rect x="273" y="624.6" width="14" height="16" rx="1.4" fill="#1f9e5c"/><rect x="280" y="624.6" width="7" height="5.4" fill="#33c481"/><rect x="280" y="635.2" width="7" height="5.4" fill="#107c41"/><rect x="269" y="628" width="9.6" height="9.6" rx="1.2" fill="#107c41"/>
<rect x="310" y="624.6" width="14" height="16" rx="1.4" fill="#2b7cd3"/><rect x="310" y="624.6" width="14" height="4" fill="#41a5ee"/><rect x="310" y="636.6" width="14" height="4" fill="#103f91"/><rect x="306" y="628" width="9.6" height="9.6" rx="1.2" fill="#185abd"/>
<circle cx="353" cy="633" r="8.8" fill="#e8453c"/><path d="M353,633 L345.4,637.4 A8.8,8.8 0 0 1 345.4,628.6 Z" fill="#e8453c"/><path d="M353,633 L345.3,628.8 A8.8,8.8 0 0 0 353,641.8 L357.6,635 Z" fill="#31a651"/><path d="M353,633 L361.6,631 A8.8,8.8 0 0 1 353,641.8 L356,634.6 Z" fill="#fbbf12"/><path d="M353,624.2 A8.8,8.8 0 0 1 361.8,632 L353,632 Z" fill="#e8453c"/><circle cx="353" cy="633" r="4.1" fill="#fff"/><circle cx="353" cy="633" r="3.2" fill="#4086f4"/>
<rect x="385" y="624.6" width="13.6" height="16" rx="1.4" fill="#b153d6"/><rect x="394" y="624.6" width="4.6" height="5.4" fill="#d483f0"/><rect x="394" y="635.2" width="4.6" height="5.4" fill="#8a2fb3"/><rect x="381" y="628" width="9.6" height="9.6" rx="1.2" fill="#7719aa"/>
<path d="M808,638.6 Q804,638.6 804,635.2 Q804,632 807.6,631.6 Q808.6,627.4 813,627.6 Q816.6,627.8 817.8,631 Q822.6,631 822.8,635 Q822.6,638.6 819,638.6 Z" fill="#a9c9f2"/><path d="M806,637 Q807,634 811,634.6 Q814,631 818,634 Q821.4,634 822.6,636 Q822,638.6 819,638.6 L808,638.6 Q806.4,638.4 806,637 Z" fill="#d4e4fa"/>
<path d="M919,635 L922,631.8 L925,635" stroke="#e8e8e8" stroke-width="1" fill="none" stroke-linecap="round" stroke-linejoin="round"/>
<rect x="936.6" y="630.4" width="8" height="5.6" rx="0.8" stroke="#e0e0e0" stroke-width="0.9" fill="none"/><path d="M934.6,629 L934.6,633.6 L936.4,633.6 M945.4,632 L945.4,634.4" stroke="#e0e0e0" stroke-width="0.9" fill="none"/>
<rect x="955" y="630" width="6" height="6.6" rx="1.4" stroke="#e0e0e0" stroke-width="0.9" fill="none"/><path d="M961.2,632.4 L963.6,631 L963.6,635.6 L961.2,634.2 M956.4,628.4 Q958,627.2 959.8,628.4 M956.4,638.2 Q958,639.4 959.8,638.2" stroke="#e0e0e0" stroke-width="0.8" fill="none"/>
<path d="M971.6,638.4 A8,8 0 0 1 979.6,630.4 M973.8,638.4 A5.8,5.8 0 0 1 979.6,632.6 M976,638.4 A3.6,3.6 0 0 1 979.6,634.8" stroke="#bdbdbd" stroke-width="0.9" fill="none"/><circle cx="978.8" cy="637.8" r="0.9" fill="#e0e0e0"/>
<path d="M989.6,637.2 Q987.2,637 987.4,634.8 Q987.6,633 989.8,632.8 Q990.6,630 993.4,630 Q996,630 996.8,632.2 Q1000.2,632 1000.6,634.8 Q1000.6,637.2 998.2,637.2 Z" fill="#2a8ae6"/>
<path d="M1007.4,637.2 Q1005,637 1005.2,634.8 Q1005.4,633 1007.6,632.8 Q1008.4,630 1011.2,630 Q1013.8,630 1014.6,632.2 Q1018,632 1018.4,634.8 Q1018.4,637.2 1016,637.2 Z" fill="#e4e4e4"/>
<rect x="1027" y="627.2" width="7" height="12" rx="3.5" fill="#1c8cf0"/><path d="M1028.8,630.8 L1032.2,635 L1030.5,636.6 L1030.5,629.6 L1032.2,631.2 L1028.8,635.4" stroke="#fff" stroke-width="0.7" fill="none"/>
<path d="M1042.4,631.8 L1044.2,631.8 L1046.6,629.6 L1046.6,637 L1044.2,634.8 L1042.4,634.8 Z" stroke="#e0e0e0" stroke-width="0.8" fill="none" stroke-linejoin="round"/><path d="M1048.8,631.4 L1052.4,635 M1052.4,631.4 L1048.8,635" stroke="#e0e0e0" stroke-width="0.8"/>
<path d="M1122.4,627.6 L1133,627.6 L1133,636.4 L1127,636.4 L1124.6,638.8 L1124.6,636.4 L1122.4,636.4 Z" fill="#f0f0f0"/><path d="M1124.4,630 L1131,630 M1124.4,632.1 L1131,632.1 M1124.4,634.2 L1128.4,634.2" stroke="#555" stroke-width="0.45"/><circle cx="1133.6" cy="638.4" r="4.3" fill="#101012" stroke="#e8e8e8" stroke-width="0.9"/>
<path d="M1148.4,620 L1148.4,648" stroke="#5a5a5a" stroke-width="0.7"/></g>
<g id="thumbs"><rect x="27" y="141.7" width="125" height="70.8" rx="3" fill="#fff"/>
<rect x="27" y="228.4" width="125" height="70.8" rx="3" fill="#fff"/>
<rect x="27" y="315.1" width="125" height="70.8" rx="3" fill="#fff"/>
<rect x="27" y="401.8" width="125" height="70.8" rx="3" fill="#fff"/>
<rect x="24.6" y="485.4" width="129.8" height="77" rx="4.6" fill="#2a1408" stroke="#f4cdb8" stroke-width="1.5"/>
<rect x="27" y="488.5" width="125" height="70.8" rx="3" fill="#fff"/>
<path d="M27,601.5 L27,578.2 Q27,575.2 30,575.2 L149,575.2 Q152,575.2 152,578.2 L152,601.5 Z" fill="#fff"/>
<rect x="30.5" y="145.6" width="73.0" height="0.9" fill="#445" opacity="0.7"/><rect x="33.0" y="148.3" width="16.0" height="0.9" fill="#445" opacity="0.7"/>
<path d="M41.5,204.8 L41.5,156 L107.8,156 M41.5,204.8 L107.8,204.8" stroke="#888" stroke-width="0.6" fill="none"/>
<path d="M49.6,169.4 Q52,162 62,158.6 Q70,156.6 78,158 Q88,160.6 95.4,167.6 Q96.4,171 94,173 L88,172 Q72,169.4 56,171.6 Z" fill="#f6cf7a"/>
<path d="M51.4,168.8 Q55,162.6 63,159.8 Q71,158 78,159.4 Q87,162 93.4,168 L88.6,171 Q72,168 56.4,170.4 Z" fill="#ea8a36"/>
<path d="M57,166 Q66,160.6 78,162.4 Q84,164 88,167.6 Q72,164.6 57,168.4 Z" fill="#f2a84c"/>
<path d="M82,170.6 Q88,166 95,170 Q97.4,176 97,188 L96.6,203.6 L81.6,203.6 Q85,197 87,190 Q89,181 86,175 Z" fill="#d4401e"/>
<path d="M89.6,172 Q94,176 93,188 Q92,198 89.6,203.6 L86,203.6 Q90.6,192 90,183 Q90,177 88,172.6 Z" fill="#b42a14"/>
<path d="M56,174 Q60,171.4 66,172.4 L82,172 Q86,173 86.6,177 Q86,181 82,181.6 L60,181 Q55.4,179 56,174 Z" fill="#fbeee0"/>
<path d="M55.4,172.6 Q58,171 61,172.6 Q59,176 60.4,179.6 Q57,179.6 55.6,177.6 Z" fill="#f0a04a"/>
<path d="M67,177.2 Q74,185 81,177.6 L79.6,181.6 Q74,186 68.4,181.6 Z" fill="#dc3c24"/>
<path d="M56,182.6 Q62,180.6 70,183 Q80,185.6 88.4,181.6 Q89.4,188 86,192 Q78,196 68,195.2 Q58,194.6 55.4,190.6 Q57.4,186.6 56,182.6 Z" fill="#e6542c"/>
<path d="M64,188 Q74,191 85,187 Q83,192 76,193.4 Q68,193.6 64,188 Z" fill="#f07a4a"/>
<path d="M60,185 Q62.6,189 61.6,191.8 Q58.6,192.6 57.6,189.6 Q58,187 60,185 Z" fill="#f8e07a"/>
<path d="M74.6,194.6 Q78,193.4 81.6,194.4 L81,203.6 L75.4,203.6 Z" fill="#f6d870"/>
<rect x="61.2" y="172.8" width="6.8" height="4.1" fill="#fff200"/>
<rect x="80.5" y="173.6" width="6.4" height="4.1" fill="#fff200"/>
<rect x="61.2" y="180.9" width="6.5" height="4" fill="#fff200"/>
<rect x="69.3" y="184.5" width="7.2" height="3.7" fill="#fff200"/>
<rect x="78.5" y="180.9" width="6.4" height="4" fill="#fff200"/>
<rect x="49.4" y="206.2" width="50.6" height="1.2" fill="#333" opacity="0.7"/><rect x="42.3" y="209.2" width="66.3" height="1.2" fill="#333" opacity="0.7"/>
<rect x="37.8" y="233.2" width="92.2" height="44.4" fill="#fff" stroke="#222" stroke-width="0.8"/>
<rect x="38.6" y="234.8" width="57.0" height="0.8" fill="#444" opacity="0.6"/>
<rect x="38.6" y="243.4" width="8.0" height="0.8" fill="#555" opacity="0.55"/>
<rect x="49.0" y="243.4" width="70.0" height="0.8" fill="#555" opacity="0.55"/>
<rect x="49.0" y="245.6" width="66.0" height="0.8" fill="#555" opacity="0.55"/>
<rect x="49.0" y="247.8" width="71.0" height="0.8" fill="#555" opacity="0.55"/>
<rect x="38.6" y="254.6" width="8.0" height="0.8" fill="#555" opacity="0.55"/>
<rect x="38.6" y="257.0" width="76.0" height="0.8" fill="#555" opacity="0.55"/>
<rect x="38.6" y="264.0" width="77.0" height="0.8" fill="#555" opacity="0.55"/>
<rect x="38.6" y="266.2" width="26.0" height="0.8" fill="#555" opacity="0.55"/>
<rect x="32.8" y="325.8" width="114.4" height="42.6" fill="#fdecc6" stroke="#2a2a2a" stroke-width="0.9"/>
<rect x="33.6" y="327.0" width="66.0" height="0.9" fill="#222" opacity="0.8"/>
<rect x="33.6" y="329.4" width="36.0" height="0.9" fill="#444" opacity="0.6"/>
<rect x="33.6" y="332.6" width="12.0" height="0.9" fill="#555" opacity="0.6"/>
<rect x="48.0" y="332.6" width="95.0" height="0.9" fill="#555" opacity="0.55"/>
<rect x="48.0" y="335.8" width="90.0" height="0.9" fill="#555" opacity="0.55"/>
<rect x="48.0" y="339.0" width="48.0" height="0.9" fill="#555" opacity="0.55"/>
<rect x="33.6" y="350.6" width="12.0" height="0.9" fill="#555" opacity="0.55"/>
<rect x="47.0" y="350.6" width="88.0" height="0.9" fill="#555" opacity="0.5"/>
<rect x="76.0" y="353.8" width="52.0" height="0.9" fill="#555" opacity="0.5"/>
<rect x="30.0" y="403.6" width="34.0" height="1.1" fill="#222" opacity="0.85"/><rect x="30.0" y="407.4" width="12.0" height="1.1" fill="#222" opacity="0.85"/><rect x="44.0" y="407.4" width="40.0" height="0.8" fill="#99a" opacity="0.7"/><rect x="44.0" y="410.2" width="28.0" height="0.8" fill="#99a" opacity="0.7"/><rect x="44.0" y="412.8" width="16.0" height="0.8" fill="#99a" opacity="0.6"/>
<rect x="30.0" y="416.2" width="18.0" height="0.9" fill="#333" opacity="0.8"/><rect x="61" y="415.4" width="11" height="2.2" fill="#35d3d3"/><rect x="30.0" y="419.0" width="47.0" height="0.9" fill="#222" opacity="0.8"/><rect x="30.0" y="421.8" width="43.0" height="0.9" fill="#222" opacity="0.8"/><rect x="30.0" y="424.8" width="20.0" height="0.9" fill="#222" opacity="0.8"/>
<rect x="30.0" y="432.6" width="48.0" height="1" fill="#111" opacity="0.9"/><rect x="30.0" y="435.4" width="47.0" height="1" fill="#111" opacity="0.9"/><rect x="30.0" y="438.0" width="30.0" height="1" fill="#111" opacity="0.9"/>
<rect x="30.0" y="443.8" width="27.0" height="0.8" fill="#777" opacity="0.6"/><rect x="32.0" y="447.0" width="33.0" height="0.8" fill="#555" opacity="0.7"/><rect x="30.0" y="452.6" width="50.0" height="0.8" fill="#666" opacity="0.65"/><rect x="30.0" y="458.4" width="40.0" height="0.8" fill="#777" opacity="0.6"/><rect x="33.0" y="461.6" width="35.0" height="0.8" fill="#555" opacity="0.7"/>
<rect x="84.4" y="403.4" width="63" height="67" fill="#fff" stroke="#ccd" stroke-width="0.4"/>
<path d="M96.6,468.6 Q97,446 103,437 Q110,432 114,431.4 L118,425 L124,425 L126,432 Q132,434 136,440 Q137.4,455 136,468.6 Z" fill="#f3cfa8"/>
<path d="M118,404 Q126,403 128,410 Q131,418 127,428 L117,430 Q112,425 113,415 Z" fill="#f1c9a0"/>
<path d="M110.6,412 Q110.6,403.4 119,403.6 Q126,403.6 125,408 Q119,409 117.4,416 Q117,424 114,427 Q110,420 110.6,412 Z" fill="#8a3818"/>
<path d="M119.6,412 Q126,411 126.6,418 Q126,426 121,430 Q117,424 119.6,412 Z" fill="#e4588a"/>
<path d="M120,428 L123.4,428 L123,444 L120.6,444 Z" fill="#58b4dc"/>
<path d="M108,441 Q112,436 118,438 L119.4,462 Q112,466 107.4,462 Q106,450 108,441 Z" fill="#d77ec6"/><path d="M122,438 Q128,437 127.6,446 Q128,456 126,461 Q122,463 120.6,458 Z" fill="#e090c8"/>
<path d="M113.6,461 Q118,457 124,460.4 L124,465.4 L113.8,465.4 Z" fill="#e2402a"/>
<path d="M108.6,421.6 L118,426 L118.4,423.4 L109.4,419.6 Z" fill="#f4e08a"/><rect x="124.6" y="410.6" width="6" height="3.4" fill="#f3ee9a"/><rect x="123" y="426" width="5.4" height="3.4" fill="#f3ee9a"/>
<rect x="86" y="431.2" width="15.2" height="3.6" fill="#fff" stroke="#222" stroke-width="0.8"/>
<rect x="83.6" y="446.2" width="15.2" height="3.6" fill="#fff" stroke="#222" stroke-width="0.8"/>
<rect x="85.4" y="457.8" width="15.2" height="3.6" fill="#fff" stroke="#222" stroke-width="0.8"/>
<rect x="132.4" y="434" width="15" height="3.6" fill="#fff" stroke="#222" stroke-width="0.8"/>
<rect x="131.2" y="441.6" width="15" height="3.6" fill="#fff" stroke="#222" stroke-width="0.8"/>
<rect x="129.8" y="451.2" width="15" height="3.6" fill="#fff" stroke="#222" stroke-width="0.8"/>
<rect x="135.0" y="412.4" width="8.0" height="0.7" fill="#666" opacity="0.7"/><rect x="138.6" y="420.0" width="4.0" height="0.7" fill="#666" opacity="0.7"/><rect x="137.0" y="423.6" width="5.0" height="0.7" fill="#666" opacity="0.7"/><rect x="100.0" y="422.0" width="5.0" height="0.7" fill="#666" opacity="0.7"/><rect x="101.0" y="426.8" width="5.0" height="0.7" fill="#669" opacity="0.7"/><rect x="87.0" y="465.2" width="6.0" height="0.7" fill="#666" opacity="0.7"/>
<path d="M127,420 L137,420 M101.6,428.6 L119,431" stroke="#8ab" stroke-width="0.4"/>
<g transform="translate(27,488.5) scale(0.16961) translate(-293,-142)"><defs>
<radialGradient id="ttg" cx="0.55" cy="0.5" r="0.62"><stop offset="0" stop-color="#ff9e84"/><stop offset="0.55" stop-color="#ff7f62"/><stop offset="1" stop-color="#fb6646"/></radialGradient>
<linearGradient id="tbl" x1="0" x2="1" y1="0" y2="0"><stop offset="0" stop-color="#38a6d2"/><stop offset="0.25" stop-color="#58b6da"/><stop offset="0.5" stop-color="#b4deec"/><stop offset="0.75" stop-color="#e2f2f7"/><stop offset="1" stop-color="#f4fafc"/></linearGradient>
<linearGradient id="tor" x1="0" x2="0" y1="0" y2="1"><stop offset="0" stop-color="#efbf68"/><stop offset="0.3" stop-color="#ebcb6a"/><stop offset="0.6" stop-color="#e3d45e"/><stop offset="1" stop-color="#dfd751"/></linearGradient>
<linearGradient id="tgr" x1="0" x2="1" y1="1" y2="0"><stop offset="0" stop-color="#5c8c2e"/><stop offset="1" stop-color="#7aa838"/></linearGradient>
</defs>
<rect x="293" y="142" width="737" height="414.5" fill="#fff"/>
<rect x="523.5" y="521.5" width="478" height="11.5" fill="#e4e6e8"/>
<rect x="523.5" y="531.5" width="478" height="1.5" fill="#d2d4d6"/>
<rect x="546.5" y="300" width="291.5" height="228.7" fill="#dfd751"/>
<rect x="667" y="265" width="171" height="263.7" fill="#dfd751"/>
<polygon points="532,155.7 703.2,155.7 703.2,265.4 673.5,265.4 673.5,305 532,305" fill="#cdcd00"/>
<polygon points="801.7,155.7 995.8,155.7 995.8,528.6 837.7,528.6 837.7,343.5 801.7,343.5" fill="#cdcd00"/>
<rect x="703.2" y="155.7" width="98.5" height="11.3" fill="#dcdc5c"/>
<rect x="990.9" y="155.7" width="4.9" height="183.7" fill="#dbd85c"/>
<rect x="703.2" y="223" width="98.5" height="56" fill="#f0b163"/>
<path d="M801.7,276 L801.7,343.5 L760,343.5 L700,330 Q704,312 712,298 Q722,284 738,279.5 Q760,276 801.7,276 Z" fill="url(#tor)"/>
<polygon points="673.5,265.4 703.2,265.4 703.2,272 673.5,272" fill="#ecc070"/>
<path d="M742,277.5 Q770,275 801.7,280 L801.7,296.5 Q792,284 770,280.5 Q755,278.5 742,279.5 Z" fill="#6c6cba"/>
<path d="M696.4,272 Q699,267 710,267.4 Q745,270 779,276.6 Q753,277 740,280.4 Q727,286 719,298 Q711,312 704,320.4 Q699.6,321.4 700,314 Q702.4,300 699.4,290 Q695.4,280 696.4,272 Z" fill="url(#tgr)"/>
<path d="M674,270.5 L683,277 L697.5,270.5 Q696,295 692,318 Q689,330 681,331 Q670,328 670,318 Q675,305 675.5,293 Q675,280 674,270.5 Z" fill="#a6dcef" stroke="#6fbfe0" stroke-width="0.8"/>
<path d="M684,277 L697,271 Q696,292 693,310 Q690,295 684,277 Z" fill="#d2eef7"/>
<path d="M762.6,311.6 Q775,311 786.4,315.1 Q795,319 799.4,325.9 Q805,335 806.9,345.4 Q810,355 810.3,365 Q811,380 809.7,391 Q809,405 803.7,414.5 Q797,424.5 786.4,425.5 Q775,425 764.8,421 Q752,416 743.2,412.5 Q733,409 725.9,407 Q720,405 718.4,399.4 Q716.4,388 716.8,376 Q717,372 718.6,371.6 Q721.4,376 726.5,373.5 Q731,368 727,361 Q722,356 716,356 Q714.8,351 717.3,345.4 Q720,336 725.9,328.1 Q733,320 743.2,315.6 Q752,312 762.6,311.6 Z" fill="url(#ttg)" stroke="#ee6a4a" stroke-width="0.6"/>
<path d="M683,351.5 Q692,350 698,357 Q703,368 703,383 Q703,398 708,404 Q714,408.5 722,408.5 Q737,411 750,416 Q770,425.5 786,427 Q798,425.5 804,416.5 Q812,404 817,397.5 Q820.5,394.5 821.5,399 Q820,408 815,420 Q810.5,435 809.5,452 L809,482.5 L790,482.5 Q790,462 786,452 Q781,441 769,436.5 Q755,432.5 739,432 L705,431.5 Q693,430 690,420 Q688,405 686,392 Q683,380 679.5,372 Q676,360 683,351.5 Z" fill="url(#tbl)" stroke="#3aa0c8" stroke-width="0.7"/>
<path d="M702,378 Q697,390 700,402 Q704,412 710,411 Q715,408 713,396 Q709,384 702,378 Z" fill="#e8507e"/>
<path d="M706,372 Q714,380 717,395 Q718,384 716,372 Q711,362 706,372 Z" fill="#f3694f"/>
<path d="M707,288 Q705,304 699,319 Q694,333 690,340.5 Q687,339 687.6,327 Q690,310 696,300 Q701,292 707,288 Z" fill="#c6c6ce" stroke="#a0a0a8" stroke-width="0.6"/>
<path d="M697.5,346.5 Q706.5,359 711,374 Q714,388 713.4,397.4 Q709,399 705,387 Q699,368 697.5,346.5 Z" fill="#c6c6ce" stroke="#a0a0a8" stroke-width="0.6"/>
<path d="M829,436 Q832,426 835,431 Q838,440 837.7,482.5 L829.5,482.5 Q828,455 829,436 Z" fill="#46aad8" stroke="#3a98c6" stroke-width="0.5"/>
<path d="M837.7,343.5 Q835.5,350 837.7,360 Z" fill="#6ab8dc"/>
<ellipse cx="812.3" cy="468" rx="2.4" ry="15" fill="#f0503c"/>
<ellipse cx="828.6" cy="466" rx="2.4" ry="15" fill="#f0503c"/>
<line x1="741.0" y1="223.4" x2="741.0" y2="268.7" stroke="#51473a" stroke-width="1.45"/><polygon points="741.0,274.5 738.6,268.7 743.4,268.7" fill="#51473a"/>
<line x1="703.5" y1="231.8" x2="711.0" y2="237.5" stroke="#51473a" stroke-width="1.3"/><polygon points="715.0,240.5 709.7,239.2 712.3,235.8" fill="#51473a"/>
<line x1="801.7" y1="262.3" x2="758.2" y2="293.1" stroke="#51473a" stroke-width="1.45"/><polygon points="753.5,296.5 756.8,291.2 759.6,295.1" fill="#51473a"/>
<line x1="673.5" y1="272.5" x2="713.2" y2="289.2" stroke="#51473a" stroke-width="1.45"/><polygon points="718.5,291.5 712.2,291.5 714.1,287.0" fill="#51473a"/>
<line x1="738.5" y1="482.5" x2="761.2" y2="326.7" stroke="#51473a" stroke-width="1.45"/><polygon points="762.0,321.0 763.6,327.1 758.8,326.4" fill="#51473a"/>
<line x1="713.5" y1="432.5" x2="717.6" y2="364.3" stroke="#51473a" stroke-width="1.45"/><polygon points="718.0,358.5 720.1,364.4 715.2,364.1" fill="#51473a"/>
<line x1="674.6" y1="376.0" x2="685.5" y2="346.9" stroke="#51473a" stroke-width="1.45"/><polygon points="687.5,341.5 687.8,347.8 683.2,346.1" fill="#51473a"/>
<line x1="674.6" y1="390.0" x2="694.5" y2="373.7" stroke="#51473a" stroke-width="1.45"/><polygon points="699.0,370.0 696.1,375.6 693.0,371.8" fill="#51473a"/>
<line x1="658.0" y1="345.5" x2="671.0" y2="350.2" stroke="#51473a" stroke-width="1.45"/><polygon points="676.5,352.2 670.2,352.5 671.9,347.9" fill="#51473a"/>
<line x1="837.7" y1="379.4" x2="831.5" y2="379.4" stroke="#51473a" stroke-width="1.4"/><polygon points="826.5,379.4 831.5,377.3 831.5,381.5" fill="#51473a"/>
<line x1="837.7" y1="403.0" x2="828.5" y2="403.0" stroke="#51473a" stroke-width="1.4"/><polygon points="823.5,403.0 828.5,400.9 828.5,405.1" fill="#51473a"/>
<line x1="837.7" y1="441.0" x2="820.8" y2="448.2" stroke="#51473a" stroke-width="1.45"/><polygon points="815.5,450.5 819.9,446.0 821.8,450.5" fill="#51473a"/>
<line x1="837.7" y1="457.8" x2="835.6" y2="457.9" stroke="#51473a" stroke-width="1.45"/><polygon points="831.6,458.2 835.5,456.3 835.7,459.6" fill="#51473a"/>
<path d="M819.9,482.5 L819.9,467.5" stroke="#4a3a30" stroke-width="1.1" fill="none"/>
<path d="M814.8,465 L819.9,461.5 L825.5,465 L819.9,468.5 Z M817.8,470.5 L819.9,467 L822,470.5" stroke="#4a3a30" stroke-width="0.8" fill="none"/>
<rect x="523.3" y="341" width="134.7" height="10.8" fill="#9accff"/>
<rect x="698.9" y="166.8" width="103.5" height="56.6" fill="#fff" stroke="#5f6b86" stroke-width="1"/>
<rect x="703.8" y="201.3" width="88.2" height="16.9" fill="#fff" stroke="#3a3a3a" stroke-width="1"/>
<rect x="499.6" y="280.8" width="167.4" height="60.5" fill="#fff" stroke="#5a6e98" stroke-width="1"/>
<rect x="539.5" y="321.4" width="88.5" height="16.6" fill="#fff" stroke="#3a3a3a" stroke-width="1"/>
<rect x="507.4" y="357.7" width="167.2" height="60.5" fill="#fff" stroke="#5a6e98" stroke-width="1"/>
<rect x="539.5" y="400.5" width="88.5" height="16.6" fill="#fff" stroke="#3a3a3a" stroke-width="1"/>
<rect x="572.5" y="432.6" width="166.8" height="88.0" fill="#fff" stroke="#5a6e98" stroke-width="1"/>
<rect x="616" y="497.5" width="88.5" height="17.1" fill="#fff" stroke="#3a3a3a" stroke-width="1"/>
<rect x="727.3" y="482.6" width="167.3" height="60.7" fill="#fff" stroke="#4c62a8" stroke-width="1"/>
<rect x="768.3" y="522" width="88.4" height="17.2" fill="#fff" stroke="#3a3a3a" stroke-width="1"/></g>
<rect x="96.67" y="498.56" width="14.96" height="2.87" fill="#fff" stroke="#1c1c1c" stroke-width="0.8"/>
<rect x="101.6" y="499.7" width="5.2" height="0.6" fill="#333" opacity="0.7"/>
<rect x="68.81" y="518.93" width="15.01" height="2.82" fill="#fff" stroke="#1c1c1c" stroke-width="0.8"/>
<rect x="73.7" y="520.0" width="5.2" height="0.6" fill="#333" opacity="0.7"/>
<rect x="68.81" y="532.34" width="15.01" height="2.82" fill="#fff" stroke="#1c1c1c" stroke-width="0.8"/>
<rect x="73.7" y="533.5" width="5.2" height="0.6" fill="#333" opacity="0.7"/>
<rect x="81.78" y="548.80" width="15.01" height="2.90" fill="#fff" stroke="#1c1c1c" stroke-width="0.8"/>
<rect x="86.7" y="549.9" width="5.2" height="0.6" fill="#333" opacity="0.7"/>
<rect x="107.61" y="552.95" width="14.99" height="2.92" fill="#fff" stroke="#1c1c1c" stroke-width="0.8"/>
<rect x="112.5" y="554.1" width="5.2" height="0.6" fill="#333" opacity="0.7"/>
<rect x="30.2" y="492.6" width="29.1" height="0.9" fill="#a66" opacity="0.55"/>
<rect x="31.3" y="495.5" width="23.5" height="1.1" fill="#222" opacity="0.85"/><rect x="31.3" y="498.2" width="26.5" height="1.1" fill="#222" opacity="0.85"/><rect x="31.3" y="501.0" width="22.0" height="1.1" fill="#222" opacity="0.85"/>
<rect x="104.1" y="495.1" width="1.0" height="1.8" fill="#333" opacity="0.7"/>
<rect x="75.7" y="516.5" width="1.0" height="1.8" fill="#333" opacity="0.7"/>
<rect x="77.0" y="529.7" width="1.0" height="1.8" fill="#333" opacity="0.7"/>
<rect x="88.1" y="544.8" width="1.0" height="1.8" fill="#333" opacity="0.7"/>
<rect x="114.3" y="550.8" width="1.0" height="1.8" fill="#333" opacity="0.7"/>
<rect x="36.0" y="584.0" width="17.0" height="0.9" fill="#567" opacity="0.8"/><rect x="36.0" y="587.6" width="46.0" height="0.8" fill="#666" opacity="0.6"/><rect x="36.0" y="590.8" width="35.0" height="0.8" fill="#666" opacity="0.6"/>
<g transform="translate(-25.6,0.6)">
<path d="M123,579.6 Q130,578 136.6,581 Q138,590 134,597 L134.6,601.5 L119,601.5 L122.6,596 Q119.6,590 123,579.6 Z" fill="#f3c9a0"/><path d="M124,580 Q131,577.6 137,581 Q138,588 135.4,592 Q133,585 129,583.4 Q126,583 124,584 Z" fill="#a4461c"/><path d="M124.4,586 Q129,585 129.6,590 Q129,595 126,597 Q123,592 124.4,586 Z" fill="#e86a78"/><path d="M127,596 L129.6,596 L129.6,601.5 L127,601.5 Z" fill="#58b4dc"/>
<rect x="112.6" y="582" width="1.4" height="2.2" fill="#5aa0e0"/>
<rect x="112" y="586.4" width="1.4" height="2.2" fill="#5aa0e0"/>
<rect x="116" y="588.6" width="1.4" height="2.2" fill="#5aa0e0"/>
<rect x="112.4" y="592" width="1.4" height="2.2" fill="#5aa0e0"/>
<rect x="114.4" y="596.6" width="1.4" height="2.2" fill="#5aa0e0"/>
<rect x="139" y="588.4" width="1.4" height="2.2" fill="#5aa0e0"/>
<rect x="140" y="583.6" width="1.4" height="2.2" fill="#5aa0e0"/>
</g>
<rect x="133.4" y="580.8" width="5.0" height="0.6" fill="#888" opacity="0.6"/>
<rect x="133.4" y="582.6" width="7.6" height="0.6" fill="#888" opacity="0.6"/>
<rect x="133.4" y="584.5" width="10.2" height="0.6" fill="#888" opacity="0.6"/>
<rect x="133.4" y="586.3" width="5.0" height="0.6" fill="#888" opacity="0.6"/>
<rect x="133.4" y="588.2" width="7.6" height="0.6" fill="#888" opacity="0.6"/>
<rect x="133.4" y="590.0" width="10.2" height="0.6" fill="#888" opacity="0.6"/>
<rect x="133.4" y="591.9" width="5.0" height="0.6" fill="#888" opacity="0.6"/>
<path d="M132.6,580 L132.6,594" stroke="#bbb" stroke-width="0.3"/></g>
</svg>
<div id="labels">
<span class="t" style="left:13.20px;top:13.98px;font-size:5.8px;line-height:8px;color:#fff;transform:scaleX(0.9823);-webkit-text-stroke:0;font-weight:700;">P</span>
<span class="t" style="left:36.70px;top:12.22px;font-size:9.2px;line-height:12px;color:#f2f2f2;transform:scaleX(1.0016);">Autoguardado</span>
<span class="t" style="left:259.00px;top:12.22px;font-size:9.2px;line-height:12px;color:#f2f2f2;transform:scaleX(0.9446);">2A SES12 MI 29 MZ0 23 SÍ SUBIR.pptx • Guardado</span>
<span class="t" style="left:543.50px;top:11.43px;font-size:9.8px;line-height:13px;color:#b4b4b4;transform:scaleX(0.9541);">Buscar</span>
<span class="t" style="left:927.00px;top:12.22px;font-size:9.2px;line-height:12px;color:#f2f2f2;transform:scaleX(0.9799);">Abigail Cruz</span>
<span class="t" style="left:986.40px;top:13.59px;font-size:6.6px;line-height:9px;color:#fff;transform:scaleX(1.0252);">AC</span>
<span class="t" style="left:6.00px;top:42.14px;font-size:10.2px;line-height:13px;color:#f2f2f2;transform:scaleX(0.9997);">Archivo</span>
<span class="t" style="left:50.80px;top:42.14px;font-size:10.2px;line-height:13px;color:#fff;transform:scaleX(1.0163);text-shadow:0.3px 0 0 #fff;">Inicio</span>
<span class="t" style="left:88.80px;top:42.14px;font-size:10.2px;line-height:13px;color:#f2f2f2;transform:scaleX(0.9977);">Insertar</span>
<span class="t" style="left:137.20px;top:42.14px;font-size:10.2px;line-height:13px;color:#f2f2f2;transform:scaleX(1.0151);">Dibujar</span>
<span class="t" style="left:184.20px;top:42.14px;font-size:10.2px;line-height:13px;color:#f2f2f2;transform:scaleX(0.9701);">Diseño</span>
<span class="t" style="left:229.00px;top:42.14px;font-size:10.2px;line-height:13px;color:#f2f2f2;transform:scaleX(0.9627);">Transiciones</span>
<span class="t" style="left:298.50px;top:42.14px;font-size:10.2px;line-height:13px;color:#f2f2f2;transform:scaleX(0.9846);">Animaciones</span>
<span class="t" style="left:370.50px;top:42.14px;font-size:10.2px;line-height:13px;color:#f2f2f2;transform:scaleX(0.9930);">Presentación con diapositivas</span>
<span class="t" style="left:519.00px;top:42.14px;font-size:10.2px;line-height:13px;color:#f2f2f2;transform:scaleX(0.9639);">Grabar</span>
<span class="t" style="left:564.40px;top:42.14px;font-size:10.2px;line-height:13px;color:#f2f2f2;transform:scaleX(0.9140);">Revisar</span>
<span class="t" style="left:611.00px;top:42.14px;font-size:10.2px;line-height:13px;color:#f2f2f2;transform:scaleX(0.9603);">Vista</span>
<span class="t" style="left:647.00px;top:42.14px;font-size:10.2px;line-height:13px;color:#f2f2f2;transform:scaleX(0.9952);">Ayuda</span>
<span class="t" style="left:962.50px;top:42.04px;font-size:10.2px;line-height:13px;color:#f2f2f2;transform:scaleX(0.9797);">Grabar</span>
<span class="t" style="left:1055.00px;top:42.04px;font-size:10.2px;line-height:13px;color:#2a1408;transform:scaleX(1.0184);">Compartir</span>
<span class="t" style="left:19.30px;top:91.52px;font-size:9.1px;line-height:12px;color:#f2f2f2;transform:scaleX(0.8936);">Pegar</span>
<span class="t" style="left:16.70px;top:121.71px;font-size:8.1px;line-height:11px;color:#e4e4e4;transform:scaleX(0.9700);">Portapapeles</span>
<span class="t" style="left:105.00px;top:90.92px;font-size:9.1px;line-height:12px;color:#f2f2f2;transform:scaleX(0.9276);">Nueva</span>
<span class="t" style="left:90.70px;top:102.52px;font-size:9.1px;line-height:12px;color:#f2f2f2;transform:scaleX(1.0163);">diapositiva</span>
<span class="t" style="left:152.70px;top:90.92px;font-size:9.1px;line-height:12px;color:#f2f2f2;transform:scaleX(0.9433);">Volver a usar</span>
<span class="t" style="left:147.30px;top:102.52px;font-size:9.1px;line-height:12px;color:#f2f2f2;transform:scaleX(0.9804);">las diapositivas</span>
<span class="t" style="left:164.00px;top:121.71px;font-size:8.1px;line-height:11px;color:#e4e4e4;transform:scaleX(0.9618);">Diapositivas</span>
<span class="t" style="left:228.70px;top:65.72px;font-size:9.1px;line-height:12px;color:#f2f2f2;transform:scaleX(0.9638);">Diseño</span>
<span class="t" style="left:228.70px;top:85.12px;font-size:9.1px;line-height:12px;color:#f2f2f2;transform:scaleX(0.9494);">Restablecer</span>
<span class="t" style="left:228.70px;top:104.12px;font-size:9.1px;line-height:12px;color:#f2f2f2;transform:scaleX(0.9483);">Sección</span>
<span class="t" style="left:423.40px;top:72.02px;font-size:8.8px;line-height:11px;color:#6a6a6a;transform:scaleX(0.8600);letter-spacing:-0.592px;">14</span>
<span class="t" style="left:459.00px;top:67.88px;font-size:13.6px;line-height:18px;color:#c8c8c8;transform:scaleX(0.9701);-webkit-text-stroke:0;">A</span>
<span class="t" style="left:479.50px;top:70.26px;font-size:11.6px;line-height:15px;color:#c8c8c8;transform:scaleX(0.9306);-webkit-text-stroke:0;">A</span>
<span class="t" style="left:498.70px;top:68.38px;font-size:13.4px;line-height:17px;color:#d0d0d0;transform:scaleX(0.8600);letter-spacing:-0.101px;-webkit-text-stroke:0;">A</span>
<span class="t" style="left:298.00px;top:93.95px;font-size:10.8px;line-height:14px;color:#f0f0f0;transform:scaleX(1.0001);-webkit-text-stroke:0;font-weight:700;">N</span>
<span class="t" style="left:318.40px;top:93.94px;font-size:10.4px;line-height:14px;color:#bdbdbd;transform:scaleX(0.9514);font-style:italic;">K</span>
<span class="t" style="left:338.20px;top:94.73px;font-size:9.6px;line-height:12px;color:#c0c0c0;transform:scaleX(0.8746);">S</span>
<span class="t" style="left:356.00px;top:93.95px;font-size:11px;line-height:14px;color:#ececec;transform:scaleX(1.0086);-webkit-text-stroke:0;font-weight:700;">S</span>
<span class="t" style="left:373.80px;top:95.12px;font-size:9.2px;line-height:12px;color:#7a7a7a;transform:scaleX(1.0554);">ab</span>
<span class="t" style="left:392.60px;top:93.33px;font-size:9.6px;line-height:12px;color:#c4c4c4;transform:scaleX(0.9922);">AV</span>
<span class="t" style="left:424.00px;top:93.94px;font-size:10.4px;line-height:14px;color:#c4c4c4;transform:scaleX(0.9433);">Aa</span>
<span class="t" style="left:489.50px;top:92.85px;font-size:11px;line-height:14px;color:#c4c4c4;transform:scaleX(1.0600);letter-spacing:0.116px;-webkit-text-stroke:0;">A</span>
<span class="t" style="left:385.80px;top:121.71px;font-size:8.1px;line-height:11px;color:#e4e4e4;transform:scaleX(0.8962);">Fuente</span>
<span class="t" style="left:586.70px;top:121.71px;font-size:8.1px;line-height:11px;color:#e4e4e4;transform:scaleX(0.9751);">Párrafo</span>
<span class="t" style="left:699.60px;top:90.92px;font-size:9.1px;line-height:12px;color:#f2f2f2;transform:scaleX(0.9338);">Formas</span>
<span class="t" style="left:733.00px;top:90.92px;font-size:9.1px;line-height:12px;color:#f2f2f2;transform:scaleX(0.9586);">Organizar</span>
<span class="t" style="left:782.50px;top:91.12px;font-size:9.1px;line-height:12px;color:#5c5c5c;transform:scaleX(0.9514);">Estilos</span>
<span class="t" style="left:775.80px;top:102.92px;font-size:9.1px;line-height:12px;color:#5c5c5c;transform:scaleX(1.0051);">rápidos</span>
<span class="t" style="left:755.00px;top:121.71px;font-size:8.1px;line-height:11px;color:#e4e4e4;transform:scaleX(0.9842);">Dibujo</span>
<span class="t" style="left:877.50px;top:65.92px;font-size:9.1px;line-height:12px;color:#f2f2f2;transform:scaleX(0.9004);">Buscar</span>
<span class="t" style="left:877.50px;top:85.32px;font-size:9.1px;line-height:12px;color:#f2f2f2;transform:scaleX(0.9519);">Reemplazar</span>
<span class="t" style="left:877.50px;top:104.12px;font-size:9.1px;line-height:12px;color:#f2f2f2;transform:scaleX(0.9485);">Seleccionar</span>
<span class="t" style="left:868.60px;top:84.19px;font-size:6.6px;line-height:9px;color:#c050c8;transform:scaleX(0.8600);letter-spacing:-0.078px;-webkit-text-stroke:0;font-weight:700;">b</span>
<span class="t" style="left:869.80px;top:89.79px;font-size:6.6px;line-height:9px;color:#3f8fd6;transform:scaleX(0.8718);-webkit-text-stroke:0;font-weight:700;">c</span>
<span class="t" style="left:888.00px;top:121.71px;font-size:8.1px;line-height:11px;color:#e4e4e4;transform:scaleX(0.9410);">Edición</span>
<span class="t" style="left:959.00px;top:91.52px;font-size:9.1px;line-height:12px;color:#f2f2f2;transform:scaleX(1.0015);">Dictar</span>
<span class="t" style="left:964.00px;top:121.71px;font-size:8.1px;line-height:11px;color:#e4e4e4;transform:scaleX(0.9622);">Voz</span>
<span class="t" style="left:1000.00px;top:90.52px;font-size:9.1px;line-height:12px;color:#f2f2f2;transform:scaleX(0.9643);">Diseñador</span>
<span class="t" style="left:1002.00px;top:121.71px;font-size:8.1px;line-height:11px;color:#e4e4e4;transform:scaleX(0.9696);">Diseñador</span>
<span class="t" style="left:3.60px;top:137.26px;font-size:11.6px;line-height:15px;color:#f0f0f0;transform:scaleX(0.8680);-webkit-text-stroke:0;">12</span>
<span class="t" style="left:3.60px;top:223.96px;font-size:11.6px;line-height:15px;color:#f0f0f0;transform:scaleX(0.8680);-webkit-text-stroke:0;">13</span>
<span class="t" style="left:3.60px;top:310.66px;font-size:11.6px;line-height:15px;color:#f0f0f0;transform:scaleX(0.8680);-webkit-text-stroke:0;">14</span>
<span class="t" style="left:3.60px;top:397.36px;font-size:11.6px;line-height:15px;color:#f0f0f0;transform:scaleX(0.8680);-webkit-text-stroke:0;">15</span>
<span class="t" style="left:3.60px;top:482.66px;font-size:11.6px;line-height:15px;color:#f0f0f0;transform:scaleX(0.8680);-webkit-text-stroke:0;">16</span>
<span class="t" style="left:3.60px;top:570.76px;font-size:11.6px;line-height:15px;color:#f0f0f0;transform:scaleX(0.8680);-webkit-text-stroke:0;">17</span>
<span class="t" style="left:190.00px;top:571.35px;font-size:11px;line-height:14px;color:#e0e0e0;transform:scaleX(0.9883);-webkit-text-stroke:0;">Haga clic para agregar notas</span>
<span class="t" style="left:6.00px;top:604.61px;font-size:8.3px;line-height:11px;color:#f0f0f0;transform:scaleX(0.9440);">Diapositiva 16 de 27</span>
<span class="t" style="left:129.00px;top:604.61px;font-size:8.3px;line-height:11px;color:#f0f0f0;transform:scaleX(0.9352);">Accesibilidad: es necesario investigar</span>
<span class="t" style="left:850.40px;top:605.41px;font-size:8.2px;line-height:11px;color:#f0f0f0;transform:scaleX(0.9430);">Notas</span>
<span class="t" style="left:1112.40px;top:605.31px;font-size:7.8px;line-height:10px;color:#f0f0f0;transform:scaleX(0.9352);">77%</span>
<span class="t" style="left:829.00px;top:626.35px;font-size:10.9px;line-height:14px;color:#f0f0f0;transform:scaleX(0.9690);-webkit-text-stroke:0;">22°C</span>
<span class="t" style="left:858.00px;top:626.35px;font-size:10.9px;line-height:14px;color:#f0f0f0;transform:scaleX(0.9950);-webkit-text-stroke:0;">Nublado</span>
<span class="t" style="left:1062.80px;top:620.52px;font-size:8.9px;line-height:12px;color:#f0f0f0;transform:scaleX(0.9657);">08:55 p. m.</span>
<span class="t" style="left:1062.20px;top:633.62px;font-size:8.9px;line-height:12px;color:#f0f0f0;transform:scaleX(1.0013);">17/04/2023</span>
<span class="t" style="left:1131.70px;top:634.09px;font-size:6.6px;line-height:9px;color:#fff;transform:scaleX(1.0352);-webkit-text-stroke:0;font-weight:700;">2</span>
<span class="t" style="left:234.80px;top:628.40px;font-size:7.2px;line-height:9px;color:#fff;transform:scaleX(1.0600);letter-spacing:0.103px;-webkit-text-stroke:0;font-weight:700;">P</span>
<span class="t" style="left:271.20px;top:628.39px;font-size:7px;line-height:9px;color:#fff;transform:scaleX(1.0600);letter-spacing:0.237px;-webkit-text-stroke:0;font-weight:700;">X</span>
<span class="t" style="left:307.40px;top:628.39px;font-size:6.6px;line-height:9px;color:#fff;transform:scaleX(1.0600);letter-spacing:0.186px;-webkit-text-stroke:0;font-weight:700;">W</span>
<span class="t" style="left:383.20px;top:628.39px;font-size:7px;line-height:9px;color:#fff;transform:scaleX(1.0286);-webkit-text-stroke:0;font-weight:700;">N</span>
</div>
</div></body></html>
